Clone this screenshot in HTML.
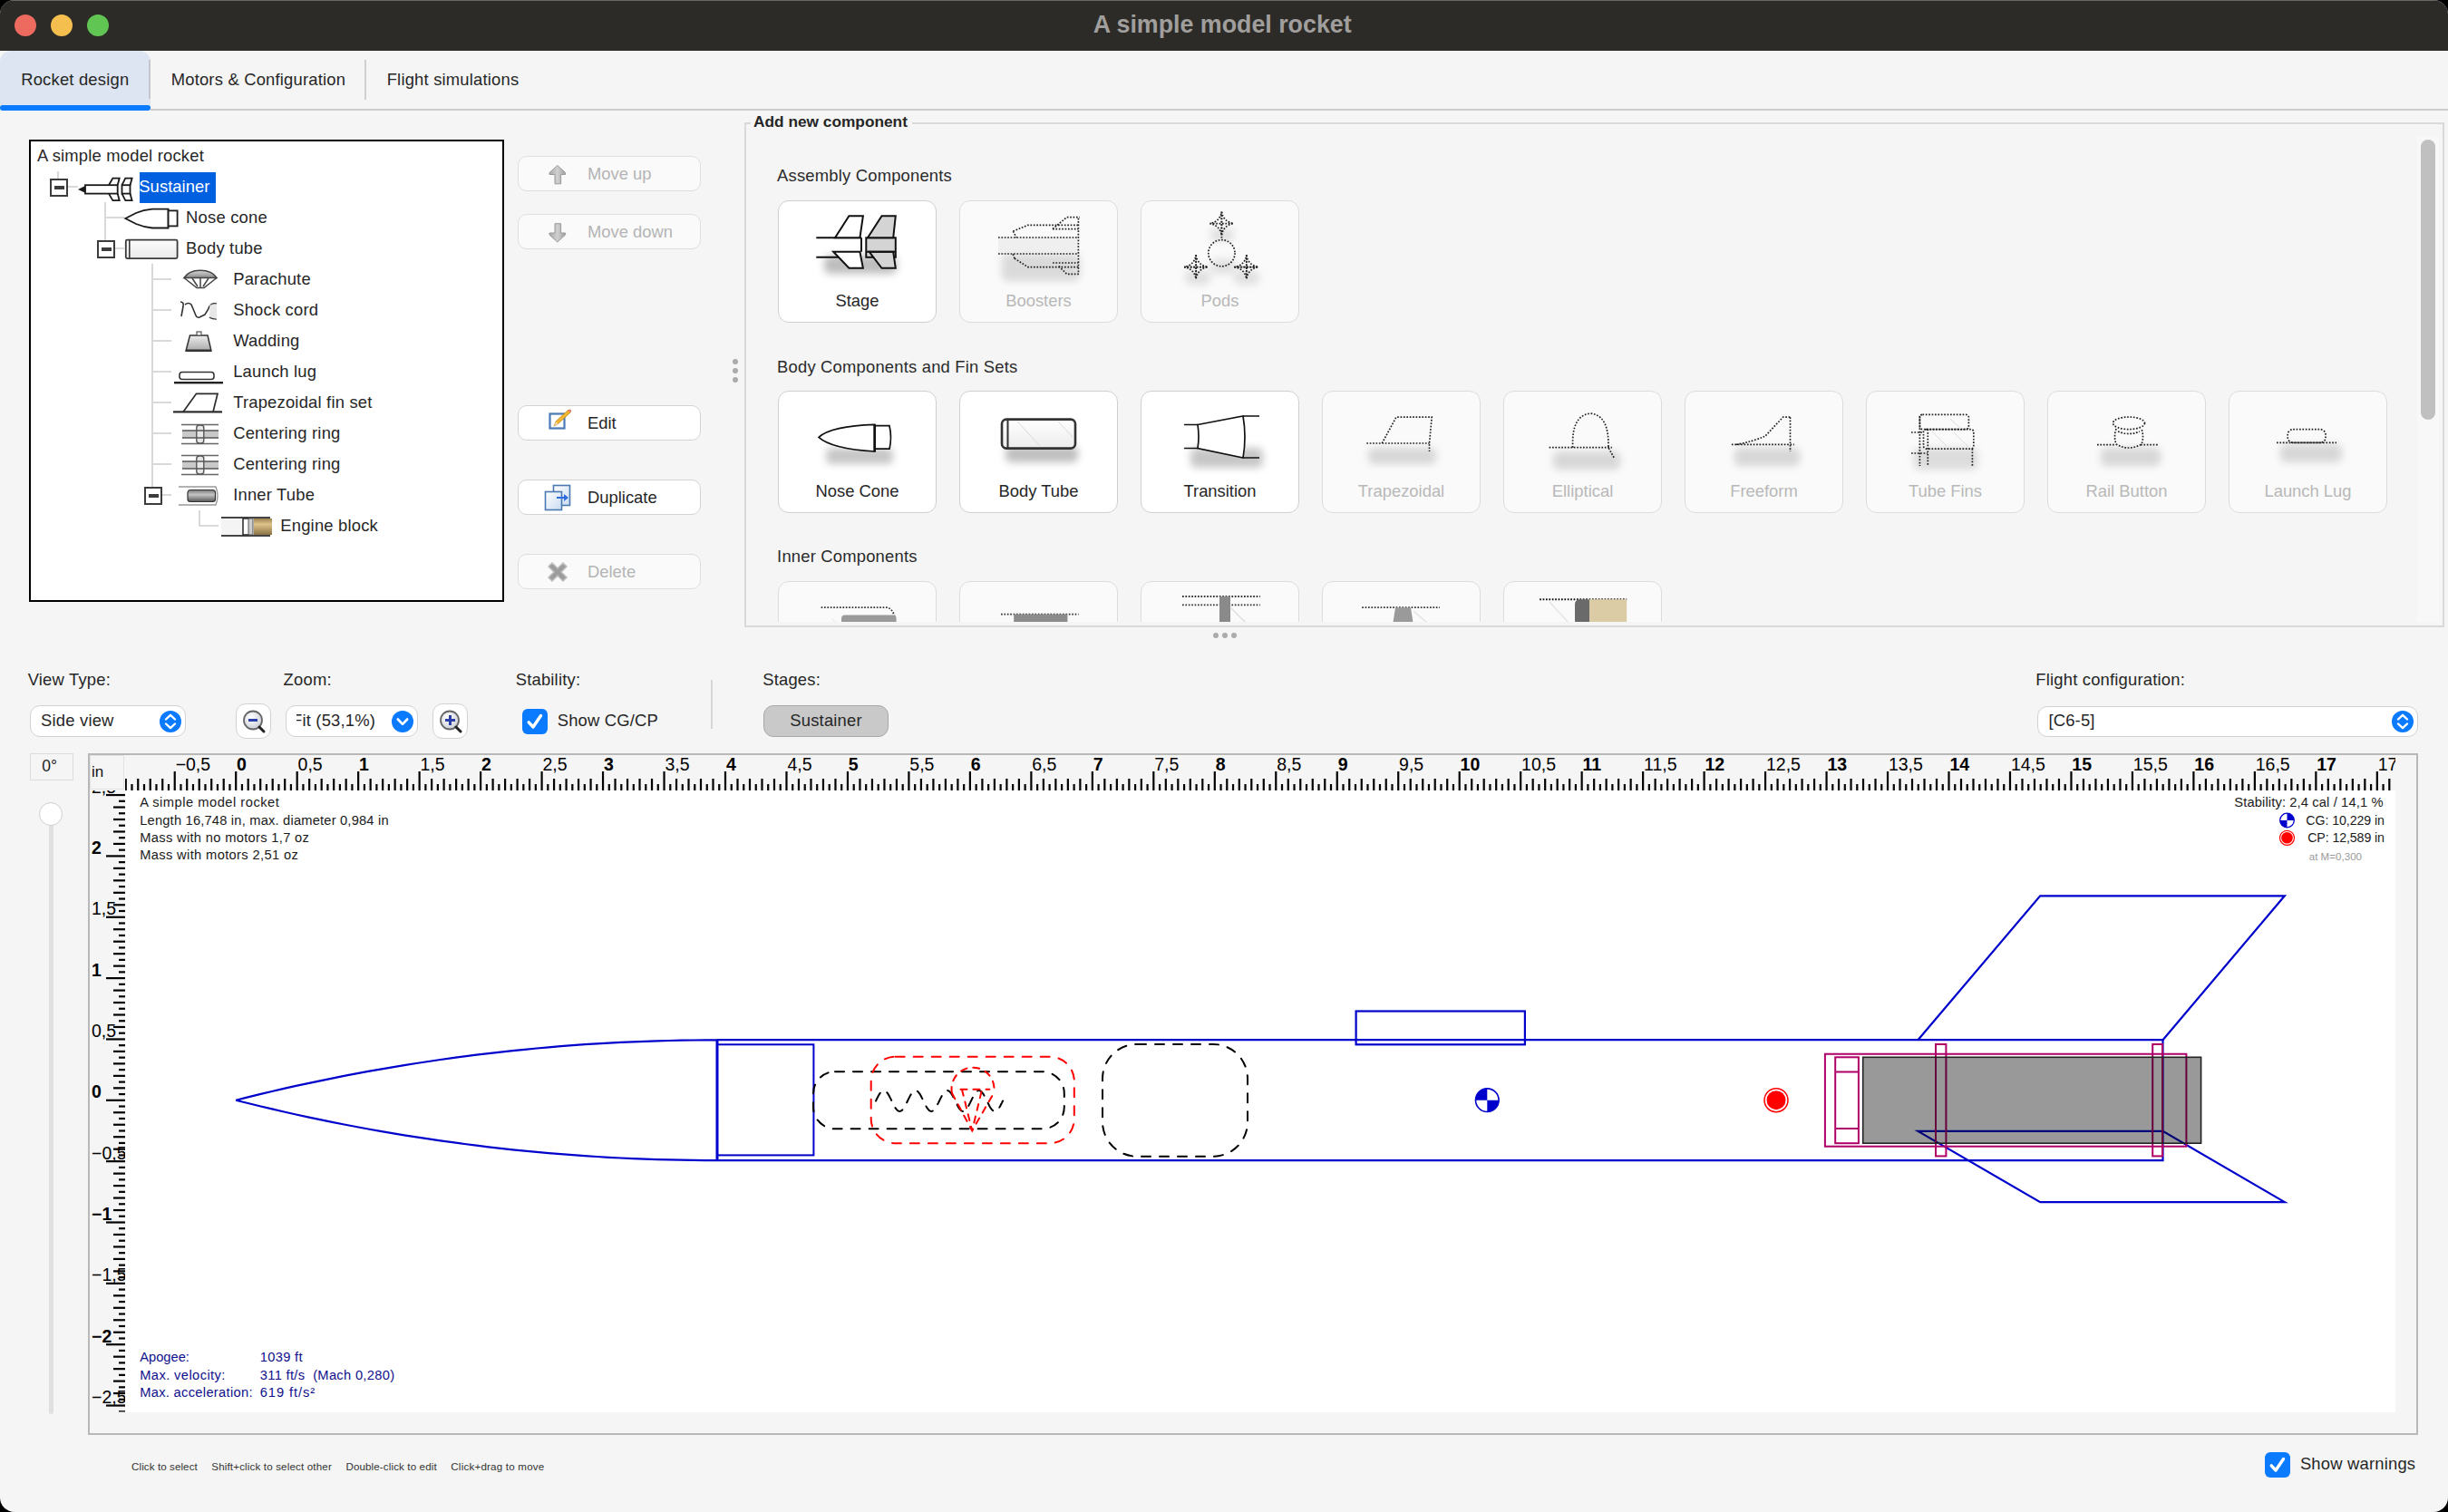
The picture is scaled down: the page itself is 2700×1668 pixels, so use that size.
<!DOCTYPE html><html><head><meta charset="utf-8"><style>

*{box-sizing:border-box;margin:0;padding:0}
html,body{width:2700px;height:1668px;overflow:hidden;background:#000}
body{font-family:"Liberation Sans",sans-serif;color:#262626;position:relative}
.win{position:absolute;left:0;top:0;width:2700px;height:1668px;background:#f5f5f5;border-radius:16px;overflow:hidden}
.a{position:absolute;white-space:pre}
.t{font-size:18.4px;line-height:22px}
.titlebar{position:absolute;left:0;top:0;width:2700px;height:56px;background:#2d2b27;border-top:1px solid #6a6865}
.light{position:absolute;width:24px;height:24px;border-radius:50%;top:16px}
.btn{position:absolute;left:571px;width:202px;height:39px;border:1.5px solid #d3d3d3;border-radius:10px;background:#fff}
.btn.dis{background:#fafafa;border-color:#dedede}
.btn .lbl{position:absolute;left:76px;top:8px;font-size:18.4px;line-height:22px;color:#262626;white-space:pre}
.btn.dis .lbl{color:#b4b4b4}
.btn svg{position:absolute;left:0;top:0}
.card{position:absolute;width:175px;height:135px;border:1.5px solid #cfcfcf;border-radius:12px;background:#fff;overflow:hidden}
.card.dis{background:#fafafa;border-color:#dcdcdc}
.card .lbl{position:absolute;left:0;width:100%;text-align:center;top:99px;font-size:18.4px;line-height:22px;color:#262626;white-space:pre}
.card.dis .lbl{color:#b8b8b8}
.card svg{position:absolute;left:0;top:0}
svg{overflow:visible}

</style></head><body><div class="win">
<svg width="0" height="0" style="position:absolute"><defs><filter id="blr" x="-50%" y="-50%" width="200%" height="200%"><feGaussianBlur stdDeviation="3.5"/></filter></defs></svg>
<div class="titlebar"></div>
<div class="light" style="left:16px;background:#ec6a5e"></div>
<div class="light" style="left:56px;background:#f4bf4f"></div>
<div class="light" style="left:96px;background:#61c554"></div>
<div class="a" style="left:1205.70px;top:11.03px;font-size:26.8px;line-height:32.16px;color:#a09f9d;font-weight:bold;">A simple model rocket</div>
<div class="a" style="left:0;top:56px;width:166px;height:64px;background:#dce5f1;border-radius:12px 12px 0 0"></div>
<div class="a" style="left:0;top:116px;width:166px;height:6px;background:#0a7aff;border-radius:3px"></div>
<div class="a" style="left:166px;top:120px;width:2534px;height:2px;background:#cbcbcb"></div>
<div class="a" style="left:164px;top:66px;width:2px;height:43px;background:#c4c8ce"></div>
<div class="a" style="left:402px;top:66px;width:2px;height:44px;background:#d0d0d0"></div>
<div class="a" style="left:23.20px;top:76.88px;font-size:18.4px;line-height:22.08px;color:#262626;font-weight:normal;letter-spacing:0.2px;">Rocket design</div>
<div class="a" style="left:188.70px;top:76.88px;font-size:18.4px;line-height:22.08px;color:#262626;font-weight:normal;letter-spacing:0.2px;">Motors &amp; Configuration</div>
<div class="a" style="left:426.70px;top:76.88px;font-size:18.4px;line-height:22.08px;color:#262626;font-weight:normal;letter-spacing:0.2px;">Flight simulations</div>
<div class="a" style="left:32px;top:154px;width:524px;height:510px;border:2px solid #000;background:#fff"></div>
<div class="a" style="left:40.90px;top:160.58px;font-size:18.4px;line-height:22.08px;color:#262626;font-weight:normal;letter-spacing:0.2px;">A simple model rocket</div>
<div class="a" style="left:63.0px;top:189px;width:2px;height:8px;background:#d9d9d9"></div>
<div class="a" style="left:75px;top:205.0px;width:11px;height:2px;background:#d9d9d9"></div>
<div class="a" style="left:115.0px;top:223px;width:2px;height:42px;background:#d9d9d9"></div>
<div class="a" style="left:116px;top:239.0px;width:21px;height:2px;background:#d9d9d9"></div>
<div class="a" style="left:127px;top:273.0px;width:10px;height:2px;background:#d9d9d9"></div>
<div class="a" style="left:167.0px;top:291px;width:2px;height:246px;background:#d9d9d9"></div>
<div class="a" style="left:168px;top:307.0px;width:21px;height:2px;background:#d9d9d9"></div>
<div class="a" style="left:168px;top:341.0px;width:21px;height:2px;background:#d9d9d9"></div>
<div class="a" style="left:168px;top:375.0px;width:21px;height:2px;background:#d9d9d9"></div>
<div class="a" style="left:168px;top:409.0px;width:21px;height:2px;background:#d9d9d9"></div>
<div class="a" style="left:168px;top:443.0px;width:21px;height:2px;background:#d9d9d9"></div>
<div class="a" style="left:168px;top:477.0px;width:21px;height:2px;background:#d9d9d9"></div>
<div class="a" style="left:168px;top:511.0px;width:21px;height:2px;background:#d9d9d9"></div>
<div class="a" style="left:179px;top:545.0px;width:10px;height:2px;background:#d9d9d9"></div>
<div class="a" style="left:219.0px;top:563px;width:2px;height:18px;background:#d9d9d9"></div>
<div class="a" style="left:220px;top:579.0px;width:21px;height:2px;background:#d9d9d9"></div>
<div class="a" style="left:55px;top:197px;width:20px;height:20px;border:2px solid #3c3c3c;background:#fff"></div><div class="a" style="left:59.5px;top:205px;width:11.5px;height:4px;background:#3c3c3c"></div>
<div class="a" style="left:107px;top:265px;width:20px;height:20px;border:2px solid #3c3c3c;background:#fff"></div><div class="a" style="left:111.5px;top:273px;width:11.5px;height:4px;background:#3c3c3c"></div>
<div class="a" style="left:159px;top:537px;width:20px;height:20px;border:2px solid #3c3c3c;background:#fff"></div><div class="a" style="left:163.5px;top:545px;width:11.5px;height:4px;background:#3c3c3c"></div>
<div class="a" style="left:154px;top:190px;width:84px;height:34px;background:#0060e0"></div>
<div class="a" style="left:153.30px;top:195.18px;font-size:18.4px;line-height:22.08px;color:#ffffff;font-weight:normal;letter-spacing:0.05px">Sustainer</div>
<div class="a" style="left:205.10px;top:229.18px;font-size:18.4px;line-height:22.08px;color:#262626;font-weight:normal;letter-spacing:0.2px;">Nose cone</div>
<div class="a" style="left:205.10px;top:263.18px;font-size:18.4px;line-height:22.08px;color:#262626;font-weight:normal;letter-spacing:0.2px;">Body tube</div>
<div class="a" style="left:257.20px;top:297.18px;font-size:18.4px;line-height:22.08px;color:#262626;font-weight:normal;letter-spacing:0.2px;">Parachute</div>
<div class="a" style="left:257.20px;top:331.18px;font-size:18.4px;line-height:22.08px;color:#262626;font-weight:normal;letter-spacing:0.2px;">Shock cord</div>
<div class="a" style="left:257.20px;top:365.18px;font-size:18.4px;line-height:22.08px;color:#262626;font-weight:normal;letter-spacing:0.2px;">Wadding</div>
<div class="a" style="left:257.20px;top:399.18px;font-size:18.4px;line-height:22.08px;color:#262626;font-weight:normal;letter-spacing:0.2px;">Launch lug</div>
<div class="a" style="left:257.20px;top:433.18px;font-size:18.4px;line-height:22.08px;color:#262626;font-weight:normal;letter-spacing:0.2px;">Trapezoidal fin set</div>
<div class="a" style="left:257.20px;top:467.18px;font-size:18.4px;line-height:22.08px;color:#262626;font-weight:normal;letter-spacing:0.2px;">Centering ring</div>
<div class="a" style="left:257.20px;top:501.18px;font-size:18.4px;line-height:22.08px;color:#262626;font-weight:normal;letter-spacing:0.2px;">Centering ring</div>
<div class="a" style="left:257.20px;top:535.18px;font-size:18.4px;line-height:22.08px;color:#262626;font-weight:normal;letter-spacing:0.2px;">Inner Tube</div>
<div class="a" style="left:309.30px;top:569.18px;font-size:18.4px;line-height:22.08px;color:#262626;font-weight:normal;letter-spacing:0.2px;">Engine block</div>
<svg class="a" style="left:84px;top:194px;" width="64" height="26" viewBox="0 0 64 26"><g fill="none" stroke="#1a1a1a" stroke-width="1.8"><rect x="10" y="10.2" width="35.7" height="9.4"/><path d="M36 10.2 L40.4 2.6 H47.7 L45.7 10.2 M36 19.6 L40.4 27.2 H47.7 L45.7 19.6"/><rect x="50.5" y="10.2" width="9" height="9.4"/><path d="M50.5 10.2 L54.3 2.6 H61.6 L59.5 10.2 M50.5 19.6 L54.3 27.2 H61.6 L59.5 19.6"/></g><path d="M2 14.9 L10 11 V18.8 Z" fill="#1a1a1a"/></svg>
<svg class="a" style="left:136px;top:228px;" width="64" height="26" viewBox="0 0 64 26"><g fill="#fff" stroke="#1a1a1a" stroke-width="1.8"><path d="M2.3 13 L14 7 Q22 3.6 32 2.6 H49.6 V23.5 H32 Q22 22.4 14 19 Z"/><rect x="49.6" y="4.4" width="10" height="17"/></g></svg>
<svg class="a" style="left:136px;top:262px;" width="64" height="26" viewBox="0 0 64 26"><defs><linearGradient id="bt" x1="0" y1="0" x2="0" y2="1"><stop offset="0" stop-color="#fdfdfd"/><stop offset="1" stop-color="#e9e9e9"/></linearGradient></defs><rect x="2.8" y="2.7" width="56.8" height="20.4" rx="1.5" fill="url(#bt)" stroke="#3a3a3a" stroke-width="1.8"/><line x1="6.8" y1="3" x2="6.8" y2="23" stroke="#3a3a3a" stroke-width="1.6"/></svg>
<svg class="a" style="left:200px;top:296px;" width="42" height="26" viewBox="0 0 42 26"><defs><linearGradient id="pc" x1="0" y1="0" x2="0" y2="1"><stop offset="0" stop-color="#d8d8d8"/><stop offset="1" stop-color="#888"/></linearGradient></defs><path d="M3 10.5 Q8 2.3 21 2.3 Q34 2.3 39 10.5 Z" fill="url(#pc)" stroke="#444" stroke-width="1.5"/><path d="M3 10.5 L17 21.5 H25 L39 10.5 M21 10.5 V21.5 M12 11 L18 20 M30 11 L24 20" fill="none" stroke="#444" stroke-width="1.5"/></svg>
<svg class="a" style="left:193px;top:330px;" width="52" height="26" viewBox="0 0 52 26"><path d="M6 3 Q10 3 9 8 L7 19 M11 6 Q15 3 18 6 L23 18 Q24 21 27 20 L33 17 Q36 13 38 8 M38 8 Q40 4 46 5 M38 20 Q41 22 46 22" fill="none" stroke="#333" stroke-width="1.6"/><path d="M38 6 L46 5 L46 22 L38 20 Z" fill="#ddd" opacity=".7"/></svg>
<svg class="a" style="left:202px;top:364px;" width="34" height="26" viewBox="0 0 34 26"><defs><linearGradient id="wd" x1="0" y1="0" x2="0" y2="1"><stop offset="0" stop-color="#eee"/><stop offset="1" stop-color="#a9a9a9"/></linearGradient></defs><path d="M7.5 6 H27 L31 23 H3 Z" fill="url(#wd)" stroke="#333" stroke-width="1.5"/><rect x="3" y="21.5" width="28" height="2.5" fill="#333"/><rect x="15" y="2" width="5" height="4" fill="#fff" stroke="#555" stroke-width="1.2"/></svg>
<svg class="a" style="left:188px;top:406px;" width="64" height="20" viewBox="0 0 64 20"><rect x="10" y="4.5" width="38" height="8" rx="3" fill="#fff" stroke="#333" stroke-width="1.6"/><rect x="4" y="15" width="54" height="2.4" fill="#222"/></svg>
<svg class="a" style="left:188px;top:432px;" width="64" height="26" viewBox="0 0 64 26"><path d="M14 22.4 L28.5 2.3 H52 L47 22.4" fill="none" stroke="#2b2b2b" stroke-width="1.7"/><rect x="3" y="21.3" width="54" height="2.2" fill="#2b2b2b"/></svg>
<svg class="a" style="left:198px;top:466px;" width="46" height="26" viewBox="0 0 46 26"><g stroke="#666" stroke-width="1.5"><line x1="2" y1="2.5" x2="43" y2="2.5"/><line x1="2" y1="23.5" x2="43" y2="23.5"/></g><rect x="3" y="9" width="40" height="8" fill="#c9c9c9"/><g stroke="#555" stroke-width="1.4" fill="#e6e6e6"><rect x="18.8" y="3" width="8" height="20" rx="3"/></g><line x1="3" y1="9" x2="43" y2="9" stroke="#555" stroke-width="1.3"/><line x1="3" y1="17" x2="43" y2="17" stroke="#555" stroke-width="1.3"/></svg>
<svg class="a" style="left:198px;top:500px;" width="46" height="26" viewBox="0 0 46 26"><g stroke="#666" stroke-width="1.5"><line x1="2" y1="2.5" x2="43" y2="2.5"/><line x1="2" y1="23.5" x2="43" y2="23.5"/></g><rect x="3" y="9" width="40" height="8" fill="#c9c9c9"/><g stroke="#555" stroke-width="1.4" fill="#e6e6e6"><rect x="18.8" y="3" width="8" height="20" rx="3"/></g><line x1="3" y1="9" x2="43" y2="9" stroke="#555" stroke-width="1.3"/><line x1="3" y1="17" x2="43" y2="17" stroke="#555" stroke-width="1.3"/></svg>
<svg class="a" style="left:194px;top:534px;" width="50" height="26" viewBox="0 0 50 26"><defs><linearGradient id="it" x1="0" y1="0" x2="0" y2="1"><stop offset="0" stop-color="#777"/><stop offset=".4" stop-color="#c5c5c5"/><stop offset="1" stop-color="#555"/></linearGradient></defs><path d="M3 3 H44 Q48 13 44 23 H3" fill="none" stroke="#999" stroke-width="1.4"/><rect x="13" y="6.5" width="30.5" height="13" rx="3" fill="url(#it)" stroke="#333" stroke-width="1.2"/></svg>
<svg class="a" style="left:242px;top:568px;" width="62" height="26" viewBox="0 0 62 26"><defs><linearGradient id="eb" x1="0" y1="0" x2="0" y2="1"><stop offset="0" stop-color="#9a8150"/><stop offset=".35" stop-color="#e0c38a"/><stop offset="1" stop-color="#8b7345"/></linearGradient></defs><rect x="2" y="4" width="26" height="18" fill="#f4f4f4"/><line x1="2" y1="3" x2="56" y2="3" stroke="#444" stroke-width="1.8"/><line x1="2" y1="23" x2="56" y2="23" stroke="#444" stroke-width="1.8"/><rect x="38" y="4" width="20" height="18" fill="url(#eb)"/><rect x="26" y="4" width="8" height="18" fill="#fff" stroke="#333" stroke-width="1.6"/><rect x="32" y="4" width="5" height="18" fill="#ccc" stroke="#555" stroke-width="1"/></svg>
<div class="btn dis" style="top:172px"><svg width="202" height="39" viewBox="0 0 202 39"><defs><linearGradient id="ag" x1="0" y1="0" x2="1" y2="0"><stop offset="0" stop-color="#a8a8a8"/><stop offset=".5" stop-color="#d0d0d0"/><stop offset="1" stop-color="#a0a0a0"/></linearGradient></defs><path d="M42.8 9.5 L51.6 17.5 V19.5 H46.6 V29.8 H40 V19.5 H34 V17.5 Z" fill="url(#ag)" stroke="#9a9a9a" stroke-width="1"/></svg><div class="lbl" style="top:8.1px">Move up</div></div>
<div class="btn dis" style="top:236px"><svg width="202" height="39" viewBox="0 0 202 39"><path d="M42.8 30 L51.6 22 V20 H46.6 V9.7 H40 V20 H34 V22 Z" fill="url(#ag)" stroke="#9a9a9a" stroke-width="1"/></svg><div class="lbl" style="top:8.1px">Move down</div></div>
<div class="btn" style="top:446.5px"><svg width="202" height="39" viewBox="0 0 202 39"><rect x="34.5" y="8.5" width="16" height="16" fill="#fff" stroke="#4a7ab5" stroke-width="2.2"/><path d="M39 22 L41 17 L55 4 L57.5 6.5 L43.5 19.5 Z" fill="#f5b82e" stroke="#b57f10" stroke-width=".8"/><path d="M39 22 L41 17 L43.5 19.5 Z" fill="#f3d9a0"/><circle cx="56.5" cy="5" r="1.6" fill="#e87a6a"/></svg><div class="lbl" style="top:8.1px">Edit</div></div>
<div class="btn" style="top:528.5px"><svg width="202" height="39" viewBox="0 0 202 39"><defs><linearGradient id="dg" x1="0" y1="0" x2="1" y2="1"><stop offset="0" stop-color="#fff"/><stop offset="1" stop-color="#c9dcf2"/></linearGradient></defs><rect x="38.5" y="5.5" width="18" height="22" fill="url(#dg)" stroke="#4a78b0" stroke-width="1.6"/><rect x="29.5" y="12.5" width="18" height="20" fill="url(#dg)" stroke="#4a78b0" stroke-width="1.6"/><path d="M42 18 H50 V15 L55 19 L50 23 V20 H42 Z" fill="#2f6be0"/></svg><div class="lbl" style="top:8.1px">Duplicate</div></div>
<div class="btn dis" style="top:610.5px"><svg width="202" height="39" viewBox="0 0 202 39"><path d="M33 13 L37 9 L43 15 L49 9 L53 13 L47 19 L53 25 L49 29 L43 23 L37 29 L33 25 L39 19 Z" fill="#9c9c9c" stroke="#bdbdbd" stroke-width="1.5"/></svg><div class="lbl" style="top:8.1px">Delete</div></div>
<div class="a" style="left:808px;top:396px;width:6px;height:6px;border-radius:50%;background:#ababab"></div>
<div class="a" style="left:808px;top:406px;width:6px;height:6px;border-radius:50%;background:#ababab"></div>
<div class="a" style="left:808px;top:416px;width:6px;height:6px;border-radius:50%;background:#ababab"></div>
<div class="a" style="left:1338px;top:698px;width:6px;height:6px;border-radius:50%;background:#ababab"></div>
<div class="a" style="left:1348px;top:698px;width:6px;height:6px;border-radius:50%;background:#ababab"></div>
<div class="a" style="left:1358px;top:698px;width:6px;height:6px;border-radius:50%;background:#ababab"></div>
<div class="a" style="left:821px;top:134.5px;width:1875px;height:557px;border:2px solid #d9d9d9;border-top-width:2px"></div>
<div class="a" style="left:828px;top:126px;width:178px;height:18px;background:#f5f5f5"></div>
<div class="a" style="left:831.00px;top:123.63px;font-size:17.3px;line-height:20.76px;color:#262626;font-weight:bold;">Add new component</div>
<div class="a" style="left:2666px;top:150px;width:24px;height:536px;background:#f8f8f8"></div>
<div class="a" style="left:2670px;top:154px;width:16px;height:309px;border-radius:8px;background:#c0c0c0"></div>
<div class="a" style="left:857.10px;top:183.18px;font-size:18.4px;line-height:22.08px;color:#2a2a2a;font-weight:normal;letter-spacing:0.2px;">Assembly Components</div>
<div class="a" style="left:857.10px;top:393.68px;font-size:18.4px;line-height:22.08px;color:#2a2a2a;font-weight:normal;letter-spacing:0.2px;">Body Components and Fin Sets</div>
<div class="a" style="left:857.10px;top:603.18px;font-size:18.4px;line-height:22.08px;color:#2a2a2a;font-weight:normal;letter-spacing:0.2px;">Inner Components</div>
<div class="card" style="left:858px;top:221px"><svg width="175" height="135" viewBox="0 0 175 135"><defs><filter id="blr858_221" x="-50%" y="-50%" width="200%" height="200%"><feGaussianBlur stdDeviation="4.5"/></filter></defs><rect x="50" y="60" width="80" height="20" rx="6" fill="rgba(0,0,0,0.26)" filter="url(#blr858_221)"/><g fill="#fff" stroke="#111" stroke-width="2"><path d="M41.3 40.3 H91 M41.3 61.8 H66" fill="none"/><path d="M62 40.3 L77.4 16.2 H92.9 L89.4 40.3 Z"/><path d="M60.2 55.8 L77.4 73.8 H92.9 L89.4 55.8 Z"/><path d="M91 40.3 V55.8" fill="none"/></g><g fill="#d4d4d4" stroke="#111" stroke-width="2"><rect x="96.3" y="40.3" width="32.5" height="21.5"/><path d="M98 40.3 L113.5 16.2 H128.8 L126.2 40.3 Z"/><path d="M99.8 55.8 L113.5 73.8 H128.8 L126.2 55.8 Z"/><path d="M96.3 55.8 H128.8" fill="none"/></g></svg><div class="lbl">Stage</div></div>
<div class="card dis" style="left:1058px;top:221px"><svg width="175" height="135" viewBox="0 0 175 135"><defs><filter id="blr1058_221" x="-50%" y="-50%" width="200%" height="200%"><feGaussianBlur stdDeviation="4.5"/></filter></defs><rect x="46" y="58" width="86" height="30" rx="6" fill="rgba(0,0,0,0.13)" filter="url(#blr1058_221)"/><rect x="42" y="40" width="88" height="18" fill="#ececec" opacity=".8"/><g fill="none" stroke="#222" stroke-width="1.7" stroke-dasharray="1.7 1.7"><path d="M42 40 H130.4 M42 58 H130.4 M130.4 18.7 V80.3"/><path d="M58.4 33.1 L74.7 26.3 H130.4 M58.4 33.1 L62 40 M102 30.6 H130.4"/><path d="M102 30.6 L117.6 17.7 H132"/><path d="M60 63.1 L74.7 72.6 H130.4 M60 63.1 L58 58 M102 68 H130.4"/><path d="M108.9 71.7 L117.6 80.3 H132"/></g></svg><div class="lbl">Boosters</div></div>
<div class="card dis" style="left:1258px;top:221px"><svg width="175" height="135" viewBox="0 0 175 135"><defs><filter id="blr1258_221" x="-50%" y="-50%" width="200%" height="200%"><feGaussianBlur stdDeviation="4.5"/></filter></defs><rect x="76" y="64" width="28" height="16" rx="6" fill="rgba(0,0,0,0.1)" filter="url(#blr1258_221)"/><rect x="48" y="76" width="28" height="16" rx="6" fill="rgba(0,0,0,0.1)" filter="url(#blr1258_221)"/><rect x="102" y="76" width="28" height="16" rx="6" fill="rgba(0,0,0,0.1)" filter="url(#blr1258_221)"/><rect x="76" y="30" width="26" height="14" rx="6" fill="rgba(0,0,0,0.1)" filter="url(#blr1258_221)"/><g fill="none" stroke="#222" stroke-width="1.7" stroke-dasharray="1.7 1.7"><circle cx="88.4" cy="57.2" r="14.6"/><path d="M88.4 11.600000000000001 Q90.4 22.6 101.4 24.6 Q90.4 26.6 88.4 37.6 Q86.4 26.6 75.4 24.6 Q86.4 22.6 88.4 11.600000000000001 Z M75.4 24.6 H101.4 M88.4 11.600000000000001 V37.6"/><path d="M60.1 59.599999999999994 Q62.1 70.6 73.1 72.6 Q62.1 74.6 60.1 85.6 Q58.1 74.6 47.1 72.6 Q58.1 70.6 60.1 59.599999999999994 Z M47.1 72.6 H73.1 M60.1 59.599999999999994 V85.6"/><path d="M115.8 59.599999999999994 Q117.8 70.6 128.8 72.6 Q117.8 74.6 115.8 85.6 Q113.8 74.6 102.8 72.6 Q113.8 70.6 115.8 59.599999999999994 Z M102.8 72.6 H128.8 M115.8 59.599999999999994 V85.6"/><path d="M88.4 11.7 V42 M47 72.6 H74 M102 72.6 H129 M60.1 59 V86 M115.8 59 V86"/></g></svg><div class="lbl">Pods</div></div>
<div class="card" style="left:858px;top:431px"><svg width="175" height="135" viewBox="0 0 175 135"><defs><filter id="blr858_431" x="-50%" y="-50%" width="200%" height="200%"><feGaussianBlur stdDeviation="4.5"/></filter></defs><rect x="52" y="62" width="74" height="18" rx="6" fill="rgba(0,0,0,0.22)" filter="url(#blr858_431)"/><g fill="#fff" stroke="#111" stroke-width="1.7"><path d="M44 50.3 Q58 38 105.7 36.4 V66 Q58 63 44 50.3 Z"/><path d="M105.7 37.7 H122 Q125 50.5 122 63.2 H105.7 Z"/></g><line x1="105.7" y1="36" x2="105.7" y2="66.4" stroke="#111" stroke-width="2.6"/></svg><div class="lbl">Nose Cone</div></div>
<div class="card" style="left:1058px;top:431px"><svg width="175" height="135" viewBox="0 0 175 135"><defs><filter id="blr1058_431" x="-50%" y="-50%" width="200%" height="200%"><feGaussianBlur stdDeviation="4.5"/></filter></defs><rect x="50" y="60" width="80" height="18" rx="6" fill="rgba(0,0,0,0.25)" filter="url(#blr1058_431)"/><defs><linearGradient id="cbt" x1="0" y1="0" x2="0" y2="1"><stop offset="0" stop-color="#fff"/><stop offset="1" stop-color="#ececec"/></linearGradient></defs><rect x="46" y="30.6" width="81" height="32" rx="5" fill="url(#cbt)" stroke="#333" stroke-width="2.6"/><line x1="52.5" y1="31" x2="52.5" y2="62" stroke="#333" stroke-width="2"/><line x1="63" y1="33" x2="88" y2="60" stroke="#d8d8d8" stroke-width="1"/><line x1="108" y1="33" x2="124" y2="50" stroke="#d8d8d8" stroke-width="1"/></svg><div class="lbl">Body Tube</div></div>
<div class="card" style="left:1258px;top:431px"><svg width="175" height="135" viewBox="0 0 175 135"><defs><filter id="blr1258_431" x="-50%" y="-50%" width="200%" height="200%"><feGaussianBlur stdDeviation="4.5"/></filter></defs><rect x="54" y="62" width="80" height="22" rx="6" fill="rgba(0,0,0,0.22)" filter="url(#blr1258_431)"/><g fill="#fff" stroke="#111" stroke-width="1.7"><path d="M62 36.5 L112 27 Q116 50 112 73 L62 62.5 Q64 50 62 36.5 Z"/><path d="M47 36.5 H62 M47 62.5 H62 M112 27 H130 M112 73 H130" fill="none"/></g></svg><div class="lbl">Transition</div></div>
<div class="card dis" style="left:1458px;top:431px"><svg width="175" height="135" viewBox="0 0 175 135"><defs><filter id="blr1458_431" x="-50%" y="-50%" width="200%" height="200%"><feGaussianBlur stdDeviation="4.5"/></filter></defs><rect x="50" y="62" width="75" height="18" rx="6" fill="rgba(0,0,0,0.14)" filter="url(#blr1458_431)"/><path d="M48.3 57 H117.5 M65.3 57 L80.9 28.2 H120.2 L117.5 57 V66" fill="none" stroke="#222" stroke-width="1.7" stroke-dasharray="1.7 1.7"/></svg><div class="lbl">Trapezoidal</div></div>
<div class="card dis" style="left:1658px;top:431px"><svg width="175" height="135" viewBox="0 0 175 135"><defs><filter id="blr1658_431" x="-50%" y="-50%" width="200%" height="200%"><feGaussianBlur stdDeviation="4.5"/></filter></defs><rect x="54" y="66" width="74" height="20" rx="6" fill="rgba(0,0,0,0.14)" filter="url(#blr1658_431)"/><path d="M49.6 61.7 H118.9 M75.7 61.7 Q74 26 95.3 24.1 Q116 26 114.9 61.7 L121.5 73.5" fill="none" stroke="#222" stroke-width="1.7" stroke-dasharray="1.7 1.7"/></svg><div class="lbl">Elliptical</div></div>
<div class="card dis" style="left:1858px;top:431px"><svg width="175" height="135" viewBox="0 0 175 135"><defs><filter id="blr1858_431" x="-50%" y="-50%" width="200%" height="200%"><feGaussianBlur stdDeviation="4.5"/></filter></defs><rect x="54" y="62" width="72" height="20" rx="6" fill="rgba(0,0,0,0.14)" filter="url(#blr1858_431)"/><path d="M50.9 58.3 H119.9 M56 58.3 Q75 55 88 49 L107.6 28.2 H116.8 M115.5 28.2 V66" fill="none" stroke="#222" stroke-width="1.7" stroke-dasharray="1.7 1.7"/></svg><div class="lbl">Freeform</div></div>
<div class="card dis" style="left:2058px;top:431px"><svg width="175" height="135" viewBox="0 0 175 135"><defs><filter id="blr2058_431" x="-50%" y="-50%" width="200%" height="200%"><feGaussianBlur stdDeviation="4.5"/></filter></defs><rect x="52" y="62" width="70" height="24" rx="6" fill="rgba(0,0,0,0.12)" filter="url(#blr2058_431)"/><g fill="none" stroke="#222" stroke-width="1.7" stroke-dasharray="1.7 1.7"><rect x="58.4" y="25.4" width="54" height="16.2" rx="3"/><rect x="62.5" y="41.6" width="55.3" height="21.5" rx="3"/><path d="M58.4 26.7 V81.9 M67.3 41.6 V81.9 M116.4 63 V82 M49 45 H62 M49 68 H67"/></g><path d="M72 44 L88 60 M92 30 L104 41 M96 45 L112 61" stroke="#ddd" stroke-width="1"/></svg><div class="lbl">Tube Fins</div></div>
<div class="card dis" style="left:2258px;top:431px"><svg width="175" height="135" viewBox="0 0 175 135"><defs><filter id="blr2258_431" x="-50%" y="-50%" width="200%" height="200%"><feGaussianBlur stdDeviation="4.5"/></filter></defs><rect x="58" y="62" width="66" height="20" rx="6" fill="rgba(0,0,0,0.14)" filter="url(#blr2258_431)"/><g fill="none" stroke="#222" stroke-width="1.7" stroke-dasharray="1.7 1.7"><path d="M54 58.6 H73 M102 58.6 H121.3"/><ellipse cx="89" cy="34.8" rx="17.5" ry="6.8"/><path d="M75 41 Q72 50 75 58 Q89 66 103 58 Q106 50 103 41"/><path d="M77 44 Q89 49 101 44"/></g></svg><div class="lbl">Rail Button</div></div>
<div class="card dis" style="left:2458px;top:431px"><svg width="175" height="135" viewBox="0 0 175 135"><defs><filter id="blr2458_431" x="-50%" y="-50%" width="200%" height="200%"><feGaussianBlur stdDeviation="4.5"/></filter></defs><rect x="56" y="58" width="68" height="20" rx="6" fill="rgba(0,0,0,0.14)" filter="url(#blr2458_431)"/><g fill="none" stroke="#222" stroke-width="1.7" stroke-dasharray="1.7 1.7"><path d="M52 56.4 H118"/><rect x="64.2" y="41.6" width="41.8" height="14.8" rx="6"/></g></svg><div class="lbl">Launch Lug</div></div>
<div class="a" style="left:822px;top:636px;width:1844px;height:50px;overflow:hidden"><div class="card dis" style="left:36px;top:5px"><svg width="175" height="135" viewBox="0 0 175 135"><defs><filter id="blr36_5" x="-50%" y="-50%" width="200%" height="200%"><feGaussianBlur stdDeviation="4.5"/></filter></defs><path d="M46.6 28.2 H120 Q126 30 128 40" stroke="#333" stroke-width="1.8" stroke-dasharray="1.7 1.7" fill="none"/><rect x="69" y="36.4" width="60.6" height="12" rx="4" fill="#9a9a9a"/><path d="M58 40 L66 48" stroke="#e4e4e4" stroke-width="1"/></svg><div class="lbl"></div></div><div class="card dis" style="left:236px;top:5px"><svg width="175" height="135" viewBox="0 0 175 135"><defs><filter id="blr236_5" x="-50%" y="-50%" width="200%" height="200%"><feGaussianBlur stdDeviation="4.5"/></filter></defs><path d="M45 35.6 H130.6" stroke="#333" stroke-width="1.8" stroke-dasharray="1.7 1.7" fill="none"/><rect x="59.2" y="35.6" width="59.2" height="12" fill="#8c8c8c"/></svg><div class="lbl"></div></div><div class="card dis" style="left:436px;top:5px"><svg width="175" height="135" viewBox="0 0 175 135"><defs><filter id="blr436_5" x="-50%" y="-50%" width="200%" height="200%"><feGaussianBlur stdDeviation="4.5"/></filter></defs><path d="M45 16 H130.8 M45 25.4 H130.8" stroke="#333" stroke-width="1.8" stroke-dasharray="1.7 1.7" fill="none"/><rect x="86" y="16" width="12" height="32" fill="#8a8a8a"/><path d="M98 28 L116 46" stroke="#e0e0e0" stroke-width="1.5"/></svg><div class="lbl"></div></div><div class="card dis" style="left:636px;top:5px"><svg width="175" height="135" viewBox="0 0 175 135"><defs><filter id="blr636_5" x="-50%" y="-50%" width="200%" height="200%"><feGaussianBlur stdDeviation="4.5"/></filter></defs><path d="M43.2 28.2 H129" stroke="#333" stroke-width="1.8" stroke-dasharray="1.7 1.7" fill="none"/><path d="M80 28.2 H97 L100 48 H77 Z" fill="#9a9a9a"/><path d="M100 32 L116 46" stroke="#e4e4e4" stroke-width="1.5"/></svg><div class="lbl"></div></div><div class="card dis" style="left:836px;top:5px"><svg width="175" height="135" viewBox="0 0 175 135"><defs><filter id="blr836_5" x="-50%" y="-50%" width="200%" height="200%"><feGaussianBlur stdDeviation="4.5"/></filter></defs><path d="M39.2 19.2 H135.2" stroke="#111" stroke-width="2" stroke-dasharray="1.7 1.7"/><path d="M50 22 L72 46" stroke="#e4e4e4" stroke-width="1.5"/><rect x="78" y="19.2" width="18.4" height="28" rx="5" fill="#6a6a6a"/><rect x="94" y="19.2" width="41.2" height="28" fill="#dccca6"/></svg><div class="lbl"></div></div></div>
<div class="a" style="left:30.70px;top:739.28px;font-size:18.4px;line-height:22.08px;color:#262626;font-weight:normal;letter-spacing:0.2px;">View Type:</div>
<div class="a" style="left:312.60px;top:739.28px;font-size:18.4px;line-height:22.08px;color:#262626;font-weight:normal;letter-spacing:0.2px;">Zoom:</div>
<div class="a" style="left:568.70px;top:739.28px;font-size:18.4px;line-height:22.08px;color:#262626;font-weight:normal;letter-spacing:0.2px;">Stability:</div>
<div class="a" style="left:841.20px;top:739.28px;font-size:18.4px;line-height:22.08px;color:#262626;font-weight:normal;letter-spacing:0.2px;">Stages:</div>
<div class="a" style="left:2245.30px;top:739.28px;font-size:18.4px;line-height:22.08px;color:#262626;font-weight:normal;letter-spacing:0.2px;">Flight configuration:</div>
<div class="a" style="left:32.7px;top:778.3px;width:172.5px;height:35.0px;background:#fff;border:1.5px solid #d2d2d2;border-radius:11px"></div><svg class="a" style="left:176.2px;top:783.8px;" width="24" height="24" viewBox="0 0 24 24"><circle cx="12" cy="12" r="12" fill="#0a7aff"/><path d="M7 9.5 L12 4.8 L17 9.5 M7 14.5 L12 19.2 L17 14.5" fill="none" stroke="#fff" stroke-width="2.4" stroke-linecap="round" stroke-linejoin="round"/></svg>
<div class="a" style="left:45.10px;top:784.28px;font-size:18.4px;line-height:22.08px;color:#262626;font-weight:normal;letter-spacing:0.2px;">Side view</div>
<div class="a" style="left:260.4px;top:776px;width:39px;height:39px;background:#fff;border:1.5px solid #d2d2d2;border-radius:11px"></div><svg class="a" style="left:262.4px;top:781px;" width="34" height="32" viewBox="0 0 34 32"><defs><radialGradient id="zgTrue" cx=".4" cy=".35" r=".7"><stop offset="0" stop-color="#fff"/><stop offset="1" stop-color="#c9cdd6"/></radialGradient></defs><circle cx="17" cy="13.5" r="10" fill="url(#zgTrue)" stroke="#666" stroke-width="1.8"/><path d="M12 13.5 H22" stroke="#2a3fa8" stroke-width="3"/><path d="M24 21 L29 26" stroke="#222" stroke-width="3" stroke-linecap="round"/></svg>
<div class="a" style="left:314.6px;top:778.3px;width:146.39999999999998px;height:35.0px;background:#fff;border:1.5px solid #d2d2d2;border-radius:11px"></div><svg class="a" style="left:432px;top:783.8px;" width="24" height="24" viewBox="0 0 24 24"><circle cx="12" cy="12" r="12" fill="#0a7aff"/><path d="M6.8 9.5 L12 14.8 L17.2 9.5" fill="none" stroke="#fff" stroke-width="2.6" stroke-linecap="round" stroke-linejoin="round"/></svg>
<div class="a" style="left:327px;top:780px;width:90px;height:30px;overflow:hidden"><div class="a" style="left:-5.00px;top:4.28px;font-size:18.4px;line-height:22.08px;color:#262626;font-weight:normal;letter-spacing:0.2px;">Fit (53,1%)</div></div>
<div class="a" style="left:476.5px;top:776px;width:39px;height:39px;background:#fff;border:1.5px solid #d2d2d2;border-radius:11px"></div><svg class="a" style="left:478.5px;top:781px;" width="34" height="32" viewBox="0 0 34 32"><defs><radialGradient id="zgFalse" cx=".4" cy=".35" r=".7"><stop offset="0" stop-color="#fff"/><stop offset="1" stop-color="#c9cdd6"/></radialGradient></defs><circle cx="17" cy="13.5" r="10" fill="url(#zgFalse)" stroke="#666" stroke-width="1.8"/><path d="M12 13.5 H23 M17.5 8 V19" stroke="#2a3fa8" stroke-width="3"/><path d="M24 21 L29 26" stroke="#222" stroke-width="3" stroke-linecap="round"/></svg>
<div class="a" style="left:576px;top:782px;width:28px;height:28px;background:#0a7aff;border-radius:6px"></div><svg class="a" style="left:576px;top:782px;" width="28" height="28" viewBox="0 0 28 28"><path d="M7.2 14.8 L12 20 L20.5 7.5" fill="none" stroke="#fff" stroke-width="3.4" stroke-linecap="round" stroke-linejoin="round"/></svg>
<div class="a" style="left:614.70px;top:784.28px;font-size:18.4px;line-height:22.08px;color:#262626;font-weight:normal;letter-spacing:0.2px;">Show CG/CP</div>
<div class="a" style="left:784px;top:750px;width:2px;height:54px;background:#d6d6d6"></div>
<div class="a" style="left:842px;top:778.2px;width:138px;height:35.2px;background:#c9c9c9;border:1.5px solid #a8a8a8;border-radius:11px"></div>
<div class="a" style="left:871.30px;top:784.28px;font-size:18.4px;line-height:22.08px;color:#262626;font-weight:normal;letter-spacing:0.2px;">Sustainer</div>
<div class="a" style="left:2247px;top:779.2px;width:419.6999999999998px;height:33.799999999999955px;background:#fff;border:1.5px solid #d2d2d2;border-radius:11px"></div><svg class="a" style="left:2637.7px;top:784.1px;" width="24" height="24" viewBox="0 0 24 24"><circle cx="12" cy="12" r="12" fill="#0a7aff"/><path d="M7 9.5 L12 4.8 L17 9.5 M7 14.5 L12 19.2 L17 14.5" fill="none" stroke="#fff" stroke-width="2.4" stroke-linecap="round" stroke-linejoin="round"/></svg>
<div class="a" style="left:2259.40px;top:784.28px;font-size:18.4px;line-height:22.08px;color:#262626;font-weight:normal;letter-spacing:0.2px;">[C6-5]</div>
<div class="a" style="left:32.7px;top:831px;width:48.6px;height:30px;border:1.5px solid #dcdcdc;background:#f5f5f5"></div>
<div class="a" style="left:46.20px;top:834.84px;font-size:17.5px;line-height:21.0px;color:#222;font-weight:normal;">0°</div>
<div class="a" style="left:53.5px;top:898px;width:5.4px;height:662px;background:#e0e0e0;border-radius:3px"></div>
<div class="a" style="left:43px;top:885px;width:26px;height:26px;border-radius:50%;background:#fff;border:1.5px solid #cfcfcf"></div>
<div class="a" style="left:96.5px;top:830.5px;width:2570.5px;height:752.5px;border:2px solid #b8b8b8;background:#f5f5f5"></div>
<div class="a" style="left:138px;top:872px;width:2504px;height:685.5px;background:#fff"></div>
<svg class="a" style="left:0;top:0" width="2700" height="1668" viewBox="0 0 2700 1668"><defs><clipPath id="rt"><rect x="138" y="832" width="2500" height="40"/></clipPath><clipPath id="rl"><rect x="98" y="872" width="40" height="685.5"/></clipPath><clipPath id="rtl"><rect x="138" y="832" width="2504" height="40"/></clipPath></defs><g fill="#000" clip-path="url(#rt)"><rect x="137.65" y="859" width="2.2" height="13"/><rect x="144.39" y="865" width="2.2" height="7"/><rect x="151.14" y="859" width="2.2" height="13"/><rect x="157.89" y="865" width="2.2" height="7"/><rect x="164.64" y="859" width="2.2" height="13"/><rect x="171.38" y="865" width="2.2" height="7"/><rect x="178.13" y="859" width="2.2" height="13"/><rect x="184.88" y="865" width="2.2" height="7"/><rect x="191.63" y="851" width="2.2" height="21"/><rect x="198.37" y="865" width="2.2" height="7"/><rect x="205.12" y="859" width="2.2" height="13"/><rect x="211.87" y="865" width="2.2" height="7"/><rect x="218.62" y="859" width="2.2" height="13"/><rect x="225.36" y="865" width="2.2" height="7"/><rect x="232.11" y="859" width="2.2" height="13"/><rect x="238.86" y="865" width="2.2" height="7"/><rect x="245.61" y="859" width="2.2" height="13"/><rect x="252.35" y="865" width="2.2" height="7"/><rect x="259.10" y="851" width="2.2" height="21"/><rect x="265.85" y="865" width="2.2" height="7"/><rect x="272.60" y="859" width="2.2" height="13"/><rect x="279.34" y="865" width="2.2" height="7"/><rect x="286.09" y="859" width="2.2" height="13"/><rect x="292.84" y="865" width="2.2" height="7"/><rect x="299.59" y="859" width="2.2" height="13"/><rect x="306.33" y="865" width="2.2" height="7"/><rect x="313.08" y="859" width="2.2" height="13"/><rect x="319.83" y="865" width="2.2" height="7"/><rect x="326.58" y="851" width="2.2" height="21"/><rect x="333.32" y="865" width="2.2" height="7"/><rect x="340.07" y="859" width="2.2" height="13"/><rect x="346.82" y="865" width="2.2" height="7"/><rect x="353.57" y="859" width="2.2" height="13"/><rect x="360.31" y="865" width="2.2" height="7"/><rect x="367.06" y="859" width="2.2" height="13"/><rect x="373.81" y="865" width="2.2" height="7"/><rect x="380.56" y="859" width="2.2" height="13"/><rect x="387.30" y="865" width="2.2" height="7"/><rect x="394.05" y="851" width="2.2" height="21"/><rect x="400.80" y="865" width="2.2" height="7"/><rect x="407.55" y="859" width="2.2" height="13"/><rect x="414.29" y="865" width="2.2" height="7"/><rect x="421.04" y="859" width="2.2" height="13"/><rect x="427.79" y="865" width="2.2" height="7"/><rect x="434.54" y="859" width="2.2" height="13"/><rect x="441.28" y="865" width="2.2" height="7"/><rect x="448.03" y="859" width="2.2" height="13"/><rect x="454.78" y="865" width="2.2" height="7"/><rect x="461.52" y="851" width="2.2" height="21"/><rect x="468.27" y="865" width="2.2" height="7"/><rect x="475.02" y="859" width="2.2" height="13"/><rect x="481.77" y="865" width="2.2" height="7"/><rect x="488.51" y="859" width="2.2" height="13"/><rect x="495.26" y="865" width="2.2" height="7"/><rect x="502.01" y="859" width="2.2" height="13"/><rect x="508.76" y="865" width="2.2" height="7"/><rect x="515.50" y="859" width="2.2" height="13"/><rect x="522.25" y="865" width="2.2" height="7"/><rect x="529.00" y="851" width="2.2" height="21"/><rect x="535.75" y="865" width="2.2" height="7"/><rect x="542.50" y="859" width="2.2" height="13"/><rect x="549.24" y="865" width="2.2" height="7"/><rect x="555.99" y="859" width="2.2" height="13"/><rect x="562.74" y="865" width="2.2" height="7"/><rect x="569.49" y="859" width="2.2" height="13"/><rect x="576.23" y="865" width="2.2" height="7"/><rect x="582.98" y="859" width="2.2" height="13"/><rect x="589.73" y="865" width="2.2" height="7"/><rect x="596.48" y="851" width="2.2" height="21"/><rect x="603.22" y="865" width="2.2" height="7"/><rect x="609.97" y="859" width="2.2" height="13"/><rect x="616.72" y="865" width="2.2" height="7"/><rect x="623.47" y="859" width="2.2" height="13"/><rect x="630.21" y="865" width="2.2" height="7"/><rect x="636.96" y="859" width="2.2" height="13"/><rect x="643.71" y="865" width="2.2" height="7"/><rect x="650.46" y="859" width="2.2" height="13"/><rect x="657.20" y="865" width="2.2" height="7"/><rect x="663.95" y="851" width="2.2" height="21"/><rect x="670.70" y="865" width="2.2" height="7"/><rect x="677.44" y="859" width="2.2" height="13"/><rect x="684.19" y="865" width="2.2" height="7"/><rect x="690.94" y="859" width="2.2" height="13"/><rect x="697.69" y="865" width="2.2" height="7"/><rect x="704.43" y="859" width="2.2" height="13"/><rect x="711.18" y="865" width="2.2" height="7"/><rect x="717.93" y="859" width="2.2" height="13"/><rect x="724.68" y="865" width="2.2" height="7"/><rect x="731.42" y="851" width="2.2" height="21"/><rect x="738.17" y="865" width="2.2" height="7"/><rect x="744.92" y="859" width="2.2" height="13"/><rect x="751.67" y="865" width="2.2" height="7"/><rect x="758.41" y="859" width="2.2" height="13"/><rect x="765.16" y="865" width="2.2" height="7"/><rect x="771.91" y="859" width="2.2" height="13"/><rect x="778.66" y="865" width="2.2" height="7"/><rect x="785.40" y="859" width="2.2" height="13"/><rect x="792.15" y="865" width="2.2" height="7"/><rect x="798.90" y="851" width="2.2" height="21"/><rect x="805.65" y="865" width="2.2" height="7"/><rect x="812.40" y="859" width="2.2" height="13"/><rect x="819.14" y="865" width="2.2" height="7"/><rect x="825.89" y="859" width="2.2" height="13"/><rect x="832.64" y="865" width="2.2" height="7"/><rect x="839.38" y="859" width="2.2" height="13"/><rect x="846.13" y="865" width="2.2" height="7"/><rect x="852.88" y="859" width="2.2" height="13"/><rect x="859.63" y="865" width="2.2" height="7"/><rect x="866.38" y="851" width="2.2" height="21"/><rect x="873.12" y="865" width="2.2" height="7"/><rect x="879.87" y="859" width="2.2" height="13"/><rect x="886.62" y="865" width="2.2" height="7"/><rect x="893.37" y="859" width="2.2" height="13"/><rect x="900.11" y="865" width="2.2" height="7"/><rect x="906.86" y="859" width="2.2" height="13"/><rect x="913.61" y="865" width="2.2" height="7"/><rect x="920.36" y="859" width="2.2" height="13"/><rect x="927.10" y="865" width="2.2" height="7"/><rect x="933.85" y="851" width="2.2" height="21"/><rect x="940.60" y="865" width="2.2" height="7"/><rect x="947.35" y="859" width="2.2" height="13"/><rect x="954.09" y="865" width="2.2" height="7"/><rect x="960.84" y="859" width="2.2" height="13"/><rect x="967.59" y="865" width="2.2" height="7"/><rect x="974.34" y="859" width="2.2" height="13"/><rect x="981.08" y="865" width="2.2" height="7"/><rect x="987.83" y="859" width="2.2" height="13"/><rect x="994.58" y="865" width="2.2" height="7"/><rect x="1001.32" y="851" width="2.2" height="21"/><rect x="1008.07" y="865" width="2.2" height="7"/><rect x="1014.82" y="859" width="2.2" height="13"/><rect x="1021.57" y="865" width="2.2" height="7"/><rect x="1028.32" y="859" width="2.2" height="13"/><rect x="1035.06" y="865" width="2.2" height="7"/><rect x="1041.81" y="859" width="2.2" height="13"/><rect x="1048.56" y="865" width="2.2" height="7"/><rect x="1055.30" y="859" width="2.2" height="13"/><rect x="1062.05" y="865" width="2.2" height="7"/><rect x="1068.80" y="851" width="2.2" height="21"/><rect x="1075.55" y="865" width="2.2" height="7"/><rect x="1082.30" y="859" width="2.2" height="13"/><rect x="1089.04" y="865" width="2.2" height="7"/><rect x="1095.79" y="859" width="2.2" height="13"/><rect x="1102.54" y="865" width="2.2" height="7"/><rect x="1109.29" y="859" width="2.2" height="13"/><rect x="1116.03" y="865" width="2.2" height="7"/><rect x="1122.78" y="859" width="2.2" height="13"/><rect x="1129.53" y="865" width="2.2" height="7"/><rect x="1136.28" y="851" width="2.2" height="21"/><rect x="1143.02" y="865" width="2.2" height="7"/><rect x="1149.77" y="859" width="2.2" height="13"/><rect x="1156.52" y="865" width="2.2" height="7"/><rect x="1163.26" y="859" width="2.2" height="13"/><rect x="1170.01" y="865" width="2.2" height="7"/><rect x="1176.76" y="859" width="2.2" height="13"/><rect x="1183.51" y="865" width="2.2" height="7"/><rect x="1190.26" y="859" width="2.2" height="13"/><rect x="1197.00" y="865" width="2.2" height="7"/><rect x="1203.75" y="851" width="2.2" height="21"/><rect x="1210.50" y="865" width="2.2" height="7"/><rect x="1217.24" y="859" width="2.2" height="13"/><rect x="1223.99" y="865" width="2.2" height="7"/><rect x="1230.74" y="859" width="2.2" height="13"/><rect x="1237.49" y="865" width="2.2" height="7"/><rect x="1244.24" y="859" width="2.2" height="13"/><rect x="1250.98" y="865" width="2.2" height="7"/><rect x="1257.73" y="859" width="2.2" height="13"/><rect x="1264.48" y="865" width="2.2" height="7"/><rect x="1271.22" y="851" width="2.2" height="21"/><rect x="1277.97" y="865" width="2.2" height="7"/><rect x="1284.72" y="859" width="2.2" height="13"/><rect x="1291.47" y="865" width="2.2" height="7"/><rect x="1298.22" y="859" width="2.2" height="13"/><rect x="1304.96" y="865" width="2.2" height="7"/><rect x="1311.71" y="859" width="2.2" height="13"/><rect x="1318.46" y="865" width="2.2" height="7"/><rect x="1325.20" y="859" width="2.2" height="13"/><rect x="1331.95" y="865" width="2.2" height="7"/><rect x="1338.70" y="851" width="2.2" height="21"/><rect x="1345.45" y="865" width="2.2" height="7"/><rect x="1352.19" y="859" width="2.2" height="13"/><rect x="1358.94" y="865" width="2.2" height="7"/><rect x="1365.69" y="859" width="2.2" height="13"/><rect x="1372.44" y="865" width="2.2" height="7"/><rect x="1379.18" y="859" width="2.2" height="13"/><rect x="1385.93" y="865" width="2.2" height="7"/><rect x="1392.68" y="859" width="2.2" height="13"/><rect x="1399.43" y="865" width="2.2" height="7"/><rect x="1406.17" y="851" width="2.2" height="21"/><rect x="1412.92" y="865" width="2.2" height="7"/><rect x="1419.67" y="859" width="2.2" height="13"/><rect x="1426.42" y="865" width="2.2" height="7"/><rect x="1433.16" y="859" width="2.2" height="13"/><rect x="1439.91" y="865" width="2.2" height="7"/><rect x="1446.66" y="859" width="2.2" height="13"/><rect x="1453.41" y="865" width="2.2" height="7"/><rect x="1460.15" y="859" width="2.2" height="13"/><rect x="1466.90" y="865" width="2.2" height="7"/><rect x="1473.65" y="851" width="2.2" height="21"/><rect x="1480.40" y="865" width="2.2" height="7"/><rect x="1487.14" y="859" width="2.2" height="13"/><rect x="1493.89" y="865" width="2.2" height="7"/><rect x="1500.64" y="859" width="2.2" height="13"/><rect x="1507.39" y="865" width="2.2" height="7"/><rect x="1514.14" y="859" width="2.2" height="13"/><rect x="1520.88" y="865" width="2.2" height="7"/><rect x="1527.63" y="859" width="2.2" height="13"/><rect x="1534.38" y="865" width="2.2" height="7"/><rect x="1541.12" y="851" width="2.2" height="21"/><rect x="1547.87" y="865" width="2.2" height="7"/><rect x="1554.62" y="859" width="2.2" height="13"/><rect x="1561.37" y="865" width="2.2" height="7"/><rect x="1568.12" y="859" width="2.2" height="13"/><rect x="1574.86" y="865" width="2.2" height="7"/><rect x="1581.61" y="859" width="2.2" height="13"/><rect x="1588.36" y="865" width="2.2" height="7"/><rect x="1595.11" y="859" width="2.2" height="13"/><rect x="1601.85" y="865" width="2.2" height="7"/><rect x="1608.60" y="851" width="2.2" height="21"/><rect x="1615.35" y="865" width="2.2" height="7"/><rect x="1622.10" y="859" width="2.2" height="13"/><rect x="1628.84" y="865" width="2.2" height="7"/><rect x="1635.59" y="859" width="2.2" height="13"/><rect x="1642.34" y="865" width="2.2" height="7"/><rect x="1649.09" y="859" width="2.2" height="13"/><rect x="1655.83" y="865" width="2.2" height="7"/><rect x="1662.58" y="859" width="2.2" height="13"/><rect x="1669.33" y="865" width="2.2" height="7"/><rect x="1676.07" y="851" width="2.2" height="21"/><rect x="1682.82" y="865" width="2.2" height="7"/><rect x="1689.57" y="859" width="2.2" height="13"/><rect x="1696.32" y="865" width="2.2" height="7"/><rect x="1703.07" y="859" width="2.2" height="13"/><rect x="1709.81" y="865" width="2.2" height="7"/><rect x="1716.56" y="859" width="2.2" height="13"/><rect x="1723.31" y="865" width="2.2" height="7"/><rect x="1730.05" y="859" width="2.2" height="13"/><rect x="1736.80" y="865" width="2.2" height="7"/><rect x="1743.55" y="851" width="2.2" height="21"/><rect x="1750.30" y="865" width="2.2" height="7"/><rect x="1757.05" y="859" width="2.2" height="13"/><rect x="1763.79" y="865" width="2.2" height="7"/><rect x="1770.54" y="859" width="2.2" height="13"/><rect x="1777.29" y="865" width="2.2" height="7"/><rect x="1784.03" y="859" width="2.2" height="13"/><rect x="1790.78" y="865" width="2.2" height="7"/><rect x="1797.53" y="859" width="2.2" height="13"/><rect x="1804.28" y="865" width="2.2" height="7"/><rect x="1811.03" y="851" width="2.2" height="21"/><rect x="1817.77" y="865" width="2.2" height="7"/><rect x="1824.52" y="859" width="2.2" height="13"/><rect x="1831.27" y="865" width="2.2" height="7"/><rect x="1838.01" y="859" width="2.2" height="13"/><rect x="1844.76" y="865" width="2.2" height="7"/><rect x="1851.51" y="859" width="2.2" height="13"/><rect x="1858.26" y="865" width="2.2" height="7"/><rect x="1865.01" y="859" width="2.2" height="13"/><rect x="1871.75" y="865" width="2.2" height="7"/><rect x="1878.50" y="851" width="2.2" height="21"/><rect x="1885.25" y="865" width="2.2" height="7"/><rect x="1891.99" y="859" width="2.2" height="13"/><rect x="1898.74" y="865" width="2.2" height="7"/><rect x="1905.49" y="859" width="2.2" height="13"/><rect x="1912.24" y="865" width="2.2" height="7"/><rect x="1918.99" y="859" width="2.2" height="13"/><rect x="1925.73" y="865" width="2.2" height="7"/><rect x="1932.48" y="859" width="2.2" height="13"/><rect x="1939.23" y="865" width="2.2" height="7"/><rect x="1945.97" y="851" width="2.2" height="21"/><rect x="1952.72" y="865" width="2.2" height="7"/><rect x="1959.47" y="859" width="2.2" height="13"/><rect x="1966.22" y="865" width="2.2" height="7"/><rect x="1972.97" y="859" width="2.2" height="13"/><rect x="1979.71" y="865" width="2.2" height="7"/><rect x="1986.46" y="859" width="2.2" height="13"/><rect x="1993.21" y="865" width="2.2" height="7"/><rect x="1999.95" y="859" width="2.2" height="13"/><rect x="2006.70" y="865" width="2.2" height="7"/><rect x="2013.45" y="851" width="2.2" height="21"/><rect x="2020.20" y="865" width="2.2" height="7"/><rect x="2026.95" y="859" width="2.2" height="13"/><rect x="2033.69" y="865" width="2.2" height="7"/><rect x="2040.44" y="859" width="2.2" height="13"/><rect x="2047.19" y="865" width="2.2" height="7"/><rect x="2053.93" y="859" width="2.2" height="13"/><rect x="2060.68" y="865" width="2.2" height="7"/><rect x="2067.43" y="859" width="2.2" height="13"/><rect x="2074.18" y="865" width="2.2" height="7"/><rect x="2080.92" y="851" width="2.2" height="21"/><rect x="2087.67" y="865" width="2.2" height="7"/><rect x="2094.42" y="859" width="2.2" height="13"/><rect x="2101.17" y="865" width="2.2" height="7"/><rect x="2107.91" y="859" width="2.2" height="13"/><rect x="2114.66" y="865" width="2.2" height="7"/><rect x="2121.41" y="859" width="2.2" height="13"/><rect x="2128.16" y="865" width="2.2" height="7"/><rect x="2134.90" y="859" width="2.2" height="13"/><rect x="2141.65" y="865" width="2.2" height="7"/><rect x="2148.40" y="851" width="2.2" height="21"/><rect x="2155.15" y="865" width="2.2" height="7"/><rect x="2161.89" y="859" width="2.2" height="13"/><rect x="2168.64" y="865" width="2.2" height="7"/><rect x="2175.39" y="859" width="2.2" height="13"/><rect x="2182.14" y="865" width="2.2" height="7"/><rect x="2188.88" y="859" width="2.2" height="13"/><rect x="2195.63" y="865" width="2.2" height="7"/><rect x="2202.38" y="859" width="2.2" height="13"/><rect x="2209.13" y="865" width="2.2" height="7"/><rect x="2215.88" y="851" width="2.2" height="21"/><rect x="2222.62" y="865" width="2.2" height="7"/><rect x="2229.37" y="859" width="2.2" height="13"/><rect x="2236.12" y="865" width="2.2" height="7"/><rect x="2242.86" y="859" width="2.2" height="13"/><rect x="2249.61" y="865" width="2.2" height="7"/><rect x="2256.36" y="859" width="2.2" height="13"/><rect x="2263.11" y="865" width="2.2" height="7"/><rect x="2269.86" y="859" width="2.2" height="13"/><rect x="2276.60" y="865" width="2.2" height="7"/><rect x="2283.35" y="851" width="2.2" height="21"/><rect x="2290.10" y="865" width="2.2" height="7"/><rect x="2296.85" y="859" width="2.2" height="13"/><rect x="2303.59" y="865" width="2.2" height="7"/><rect x="2310.34" y="859" width="2.2" height="13"/><rect x="2317.09" y="865" width="2.2" height="7"/><rect x="2323.84" y="859" width="2.2" height="13"/><rect x="2330.58" y="865" width="2.2" height="7"/><rect x="2337.33" y="859" width="2.2" height="13"/><rect x="2344.08" y="865" width="2.2" height="7"/><rect x="2350.82" y="851" width="2.2" height="21"/><rect x="2357.57" y="865" width="2.2" height="7"/><rect x="2364.32" y="859" width="2.2" height="13"/><rect x="2371.07" y="865" width="2.2" height="7"/><rect x="2377.82" y="859" width="2.2" height="13"/><rect x="2384.56" y="865" width="2.2" height="7"/><rect x="2391.31" y="859" width="2.2" height="13"/><rect x="2398.06" y="865" width="2.2" height="7"/><rect x="2404.80" y="859" width="2.2" height="13"/><rect x="2411.55" y="865" width="2.2" height="7"/><rect x="2418.30" y="851" width="2.2" height="21"/><rect x="2425.05" y="865" width="2.2" height="7"/><rect x="2431.80" y="859" width="2.2" height="13"/><rect x="2438.54" y="865" width="2.2" height="7"/><rect x="2445.29" y="859" width="2.2" height="13"/><rect x="2452.04" y="865" width="2.2" height="7"/><rect x="2458.78" y="859" width="2.2" height="13"/><rect x="2465.53" y="865" width="2.2" height="7"/><rect x="2472.28" y="859" width="2.2" height="13"/><rect x="2479.03" y="865" width="2.2" height="7"/><rect x="2485.77" y="851" width="2.2" height="21"/><rect x="2492.52" y="865" width="2.2" height="7"/><rect x="2499.27" y="859" width="2.2" height="13"/><rect x="2506.02" y="865" width="2.2" height="7"/><rect x="2512.76" y="859" width="2.2" height="13"/><rect x="2519.51" y="865" width="2.2" height="7"/><rect x="2526.26" y="859" width="2.2" height="13"/><rect x="2533.01" y="865" width="2.2" height="7"/><rect x="2539.76" y="859" width="2.2" height="13"/><rect x="2546.50" y="865" width="2.2" height="7"/><rect x="2553.25" y="851" width="2.2" height="21"/><rect x="2560.00" y="865" width="2.2" height="7"/><rect x="2566.74" y="859" width="2.2" height="13"/><rect x="2573.49" y="865" width="2.2" height="7"/><rect x="2580.24" y="859" width="2.2" height="13"/><rect x="2586.99" y="865" width="2.2" height="7"/><rect x="2593.73" y="859" width="2.2" height="13"/><rect x="2600.48" y="865" width="2.2" height="7"/><rect x="2607.23" y="859" width="2.2" height="13"/><rect x="2613.98" y="865" width="2.2" height="7"/><rect x="2620.72" y="851" width="2.2" height="21"/><rect x="2627.47" y="865" width="2.2" height="7"/><rect x="2634.22" y="859" width="2.2" height="13"/><rect x="2640.97" y="865" width="2.2" height="7"/></g>
<g fill="#000" clip-path="url(#rl)"><rect x="125" y="1576.39" width="13" height="2.2"/><rect x="131" y="1569.66" width="7" height="2.2"/><rect x="125" y="1562.92" width="13" height="2.2"/><rect x="131" y="1556.18" width="7" height="2.2"/><rect x="117" y="1549.45" width="21" height="2.2"/><rect x="131" y="1542.72" width="7" height="2.2"/><rect x="125" y="1535.98" width="13" height="2.2"/><rect x="131" y="1529.24" width="7" height="2.2"/><rect x="125" y="1522.51" width="13" height="2.2"/><rect x="131" y="1515.78" width="7" height="2.2"/><rect x="125" y="1509.04" width="13" height="2.2"/><rect x="131" y="1502.31" width="7" height="2.2"/><rect x="125" y="1495.57" width="13" height="2.2"/><rect x="131" y="1488.84" width="7" height="2.2"/><rect x="117" y="1482.10" width="21" height="2.2"/><rect x="131" y="1475.37" width="7" height="2.2"/><rect x="125" y="1468.63" width="13" height="2.2"/><rect x="131" y="1461.89" width="7" height="2.2"/><rect x="125" y="1455.16" width="13" height="2.2"/><rect x="131" y="1448.42" width="7" height="2.2"/><rect x="125" y="1441.69" width="13" height="2.2"/><rect x="131" y="1434.95" width="7" height="2.2"/><rect x="125" y="1428.22" width="13" height="2.2"/><rect x="131" y="1421.49" width="7" height="2.2"/><rect x="117" y="1414.75" width="21" height="2.2"/><rect x="131" y="1408.02" width="7" height="2.2"/><rect x="125" y="1401.28" width="13" height="2.2"/><rect x="131" y="1394.55" width="7" height="2.2"/><rect x="125" y="1387.81" width="13" height="2.2"/><rect x="131" y="1381.08" width="7" height="2.2"/><rect x="125" y="1374.34" width="13" height="2.2"/><rect x="131" y="1367.61" width="7" height="2.2"/><rect x="125" y="1360.87" width="13" height="2.2"/><rect x="131" y="1354.13" width="7" height="2.2"/><rect x="117" y="1347.40" width="21" height="2.2"/><rect x="131" y="1340.66" width="7" height="2.2"/><rect x="125" y="1333.93" width="13" height="2.2"/><rect x="131" y="1327.20" width="7" height="2.2"/><rect x="125" y="1320.46" width="13" height="2.2"/><rect x="131" y="1313.73" width="7" height="2.2"/><rect x="125" y="1306.99" width="13" height="2.2"/><rect x="131" y="1300.26" width="7" height="2.2"/><rect x="125" y="1293.52" width="13" height="2.2"/><rect x="131" y="1286.79" width="7" height="2.2"/><rect x="117" y="1280.05" width="21" height="2.2"/><rect x="131" y="1273.32" width="7" height="2.2"/><rect x="125" y="1266.58" width="13" height="2.2"/><rect x="131" y="1259.85" width="7" height="2.2"/><rect x="125" y="1253.11" width="13" height="2.2"/><rect x="131" y="1246.38" width="7" height="2.2"/><rect x="125" y="1239.64" width="13" height="2.2"/><rect x="131" y="1232.90" width="7" height="2.2"/><rect x="125" y="1226.17" width="13" height="2.2"/><rect x="131" y="1219.43" width="7" height="2.2"/><rect x="117" y="1212.70" width="21" height="2.2"/><rect x="131" y="1205.97" width="7" height="2.2"/><rect x="125" y="1199.23" width="13" height="2.2"/><rect x="131" y="1192.50" width="7" height="2.2"/><rect x="125" y="1185.76" width="13" height="2.2"/><rect x="131" y="1179.03" width="7" height="2.2"/><rect x="125" y="1172.29" width="13" height="2.2"/><rect x="131" y="1165.56" width="7" height="2.2"/><rect x="125" y="1158.82" width="13" height="2.2"/><rect x="131" y="1152.09" width="7" height="2.2"/><rect x="117" y="1145.35" width="21" height="2.2"/><rect x="131" y="1138.62" width="7" height="2.2"/><rect x="125" y="1131.88" width="13" height="2.2"/><rect x="131" y="1125.14" width="7" height="2.2"/><rect x="125" y="1118.41" width="13" height="2.2"/><rect x="131" y="1111.67" width="7" height="2.2"/><rect x="125" y="1104.94" width="13" height="2.2"/><rect x="131" y="1098.20" width="7" height="2.2"/><rect x="125" y="1091.47" width="13" height="2.2"/><rect x="131" y="1084.74" width="7" height="2.2"/><rect x="117" y="1078.00" width="21" height="2.2"/><rect x="131" y="1071.27" width="7" height="2.2"/><rect x="125" y="1064.53" width="13" height="2.2"/><rect x="131" y="1057.80" width="7" height="2.2"/><rect x="125" y="1051.06" width="13" height="2.2"/><rect x="131" y="1044.33" width="7" height="2.2"/><rect x="125" y="1037.59" width="13" height="2.2"/><rect x="131" y="1030.86" width="7" height="2.2"/><rect x="125" y="1024.12" width="13" height="2.2"/><rect x="131" y="1017.38" width="7" height="2.2"/><rect x="117" y="1010.65" width="21" height="2.2"/><rect x="131" y="1003.92" width="7" height="2.2"/><rect x="125" y="997.18" width="13" height="2.2"/><rect x="131" y="990.45" width="7" height="2.2"/><rect x="125" y="983.71" width="13" height="2.2"/><rect x="131" y="976.98" width="7" height="2.2"/><rect x="125" y="970.24" width="13" height="2.2"/><rect x="131" y="963.51" width="7" height="2.2"/><rect x="125" y="956.77" width="13" height="2.2"/><rect x="131" y="950.04" width="7" height="2.2"/><rect x="117" y="943.30" width="21" height="2.2"/><rect x="131" y="936.57" width="7" height="2.2"/><rect x="125" y="929.83" width="13" height="2.2"/><rect x="131" y="923.10" width="7" height="2.2"/><rect x="125" y="916.36" width="13" height="2.2"/><rect x="131" y="909.62" width="7" height="2.2"/><rect x="125" y="902.89" width="13" height="2.2"/><rect x="131" y="896.16" width="7" height="2.2"/><rect x="125" y="889.42" width="13" height="2.2"/><rect x="131" y="882.69" width="7" height="2.2"/><rect x="117" y="875.95" width="21" height="2.2"/>
<text x="101" y="1548.15" font-family="Liberation Sans" font-size="19.5" font-weight="normal" fill="#000">−2,5</text>
<text x="101" y="1480.80" font-family="Liberation Sans" font-size="19.5" font-weight="bold" fill="#000">−2</text>
<text x="101" y="1413.45" font-family="Liberation Sans" font-size="19.5" font-weight="normal" fill="#000">−1,5</text>
<text x="101" y="1346.10" font-family="Liberation Sans" font-size="19.5" font-weight="bold" fill="#000">−1</text>
<text x="101" y="1278.75" font-family="Liberation Sans" font-size="19.5" font-weight="normal" fill="#000">−0,5</text>
<text x="101" y="1211.40" font-family="Liberation Sans" font-size="19.5" font-weight="bold" fill="#000">0</text>
<text x="101" y="1144.05" font-family="Liberation Sans" font-size="19.5" font-weight="normal" fill="#000">0,5</text>
<text x="101" y="1076.70" font-family="Liberation Sans" font-size="19.5" font-weight="bold" fill="#000">1</text>
<text x="101" y="1009.35" font-family="Liberation Sans" font-size="19.5" font-weight="normal" fill="#000">1,5</text>
<text x="101" y="942.00" font-family="Liberation Sans" font-size="19.5" font-weight="bold" fill="#000">2</text>
<text x="101" y="874.65" font-family="Liberation Sans" font-size="19.5" font-weight="normal" fill="#000">2,5</text>
</g>
<text x="193.63" y="850" font-family="Liberation Sans" font-size="19.5" font-weight="normal" fill="#000" clip-path="url(#rtl)">−0,5</text>
<text x="261.10" y="850" font-family="Liberation Sans" font-size="19.5" font-weight="bold" fill="#000" clip-path="url(#rtl)">0</text>
<text x="328.58" y="850" font-family="Liberation Sans" font-size="19.5" font-weight="normal" fill="#000" clip-path="url(#rtl)">0,5</text>
<text x="396.05" y="850" font-family="Liberation Sans" font-size="19.5" font-weight="bold" fill="#000" clip-path="url(#rtl)">1</text>
<text x="463.52" y="850" font-family="Liberation Sans" font-size="19.5" font-weight="normal" fill="#000" clip-path="url(#rtl)">1,5</text>
<text x="531.00" y="850" font-family="Liberation Sans" font-size="19.5" font-weight="bold" fill="#000" clip-path="url(#rtl)">2</text>
<text x="598.48" y="850" font-family="Liberation Sans" font-size="19.5" font-weight="normal" fill="#000" clip-path="url(#rtl)">2,5</text>
<text x="665.95" y="850" font-family="Liberation Sans" font-size="19.5" font-weight="bold" fill="#000" clip-path="url(#rtl)">3</text>
<text x="733.42" y="850" font-family="Liberation Sans" font-size="19.5" font-weight="normal" fill="#000" clip-path="url(#rtl)">3,5</text>
<text x="800.90" y="850" font-family="Liberation Sans" font-size="19.5" font-weight="bold" fill="#000" clip-path="url(#rtl)">4</text>
<text x="868.38" y="850" font-family="Liberation Sans" font-size="19.5" font-weight="normal" fill="#000" clip-path="url(#rtl)">4,5</text>
<text x="935.85" y="850" font-family="Liberation Sans" font-size="19.5" font-weight="bold" fill="#000" clip-path="url(#rtl)">5</text>
<text x="1003.32" y="850" font-family="Liberation Sans" font-size="19.5" font-weight="normal" fill="#000" clip-path="url(#rtl)">5,5</text>
<text x="1070.80" y="850" font-family="Liberation Sans" font-size="19.5" font-weight="bold" fill="#000" clip-path="url(#rtl)">6</text>
<text x="1138.28" y="850" font-family="Liberation Sans" font-size="19.5" font-weight="normal" fill="#000" clip-path="url(#rtl)">6,5</text>
<text x="1205.75" y="850" font-family="Liberation Sans" font-size="19.5" font-weight="bold" fill="#000" clip-path="url(#rtl)">7</text>
<text x="1273.22" y="850" font-family="Liberation Sans" font-size="19.5" font-weight="normal" fill="#000" clip-path="url(#rtl)">7,5</text>
<text x="1340.70" y="850" font-family="Liberation Sans" font-size="19.5" font-weight="bold" fill="#000" clip-path="url(#rtl)">8</text>
<text x="1408.17" y="850" font-family="Liberation Sans" font-size="19.5" font-weight="normal" fill="#000" clip-path="url(#rtl)">8,5</text>
<text x="1475.65" y="850" font-family="Liberation Sans" font-size="19.5" font-weight="bold" fill="#000" clip-path="url(#rtl)">9</text>
<text x="1543.12" y="850" font-family="Liberation Sans" font-size="19.5" font-weight="normal" fill="#000" clip-path="url(#rtl)">9,5</text>
<text x="1610.60" y="850" font-family="Liberation Sans" font-size="19.5" font-weight="bold" fill="#000" clip-path="url(#rtl)">10</text>
<text x="1678.07" y="850" font-family="Liberation Sans" font-size="19.5" font-weight="normal" fill="#000" clip-path="url(#rtl)">10,5</text>
<text x="1745.55" y="850" font-family="Liberation Sans" font-size="19.5" font-weight="bold" fill="#000" clip-path="url(#rtl)">11</text>
<text x="1813.03" y="850" font-family="Liberation Sans" font-size="19.5" font-weight="normal" fill="#000" clip-path="url(#rtl)">11,5</text>
<text x="1880.50" y="850" font-family="Liberation Sans" font-size="19.5" font-weight="bold" fill="#000" clip-path="url(#rtl)">12</text>
<text x="1947.97" y="850" font-family="Liberation Sans" font-size="19.5" font-weight="normal" fill="#000" clip-path="url(#rtl)">12,5</text>
<text x="2015.45" y="850" font-family="Liberation Sans" font-size="19.5" font-weight="bold" fill="#000" clip-path="url(#rtl)">13</text>
<text x="2082.92" y="850" font-family="Liberation Sans" font-size="19.5" font-weight="normal" fill="#000" clip-path="url(#rtl)">13,5</text>
<text x="2150.40" y="850" font-family="Liberation Sans" font-size="19.5" font-weight="bold" fill="#000" clip-path="url(#rtl)">14</text>
<text x="2217.88" y="850" font-family="Liberation Sans" font-size="19.5" font-weight="normal" fill="#000" clip-path="url(#rtl)">14,5</text>
<text x="2285.35" y="850" font-family="Liberation Sans" font-size="19.5" font-weight="bold" fill="#000" clip-path="url(#rtl)">15</text>
<text x="2352.82" y="850" font-family="Liberation Sans" font-size="19.5" font-weight="normal" fill="#000" clip-path="url(#rtl)">15,5</text>
<text x="2420.30" y="850" font-family="Liberation Sans" font-size="19.5" font-weight="bold" fill="#000" clip-path="url(#rtl)">16</text>
<text x="2487.77" y="850" font-family="Liberation Sans" font-size="19.5" font-weight="normal" fill="#000" clip-path="url(#rtl)">16,5</text>
<text x="2555.25" y="850" font-family="Liberation Sans" font-size="19.5" font-weight="bold" fill="#000" clip-path="url(#rtl)">17</text>
<text x="2622.72" y="850" font-family="Liberation Sans" font-size="19.5" font-weight="normal" fill="#000" clip-path="url(#rtl)">17,5</text>
</svg>
<div class="a" style="left:99px;top:833px;width:38px;height:38px;border:1.5px solid #e2e2e2;background:#f5f5f5"></div>
<div class="a" style="left:101.00px;top:842.41px;font-size:17px;line-height:20.4px;color:#111;font-weight:normal;">in</div>
<svg class="a" style="left:0;top:0" width="2700" height="1668" viewBox="0 0 2700 1668"><defs><clipPath id="dr"><rect x="138" y="872" width="2504" height="685.5"/></clipPath></defs><g clip-path="url(#dr)"><path d="M260.1 1213.7 L273.4 1210.4 L286.6 1207.1 L299.9 1204.0 L313.2 1200.9 L326.5 1197.9 L339.7 1195.1 L353.0 1192.3 L366.3 1189.6 L379.6 1186.9 L392.8 1184.4 L406.1 1181.9 L419.4 1179.6 L432.6 1177.3 L445.9 1175.1 L459.2 1173.0 L472.5 1171.0 L485.7 1169.0 L499.0 1167.2 L512.3 1165.4 L525.5 1163.7 L538.8 1162.1 L552.1 1160.6 L565.4 1159.1 L578.6 1157.8 L591.9 1156.5 L605.2 1155.3 L618.5 1154.2 L631.7 1153.2 L645.0 1152.2 L658.3 1151.4 L671.5 1150.6 L684.8 1149.9 L698.1 1149.3 L711.4 1148.8 L724.6 1148.3 L737.9 1148.0 L751.2 1147.7 L764.5 1147.5 L777.7 1147.3 L791.0 1147.3 M260.1 1213.7 L273.4 1217.0 L286.6 1220.3 L299.9 1223.4 L313.2 1226.5 L326.5 1229.5 L339.7 1232.3 L353.0 1235.1 L366.3 1237.8 L379.6 1240.5 L392.8 1243.0 L406.1 1245.5 L419.4 1247.8 L432.6 1250.1 L445.9 1252.3 L459.2 1254.4 L472.5 1256.4 L485.7 1258.4 L499.0 1260.2 L512.3 1262.0 L525.5 1263.7 L538.8 1265.3 L552.1 1266.8 L565.4 1268.3 L578.6 1269.6 L591.9 1270.9 L605.2 1272.1 L618.5 1273.2 L631.7 1274.2 L645.0 1275.2 L658.3 1276.0 L671.5 1276.8 L684.8 1277.5 L698.1 1278.1 L711.4 1278.6 L724.6 1279.1 L737.9 1279.4 L751.2 1279.7 L764.5 1279.9 L777.7 1280.1 L791.0 1280.1" fill="none" stroke="#0000cc" stroke-width="2.2"/><line x1="791" y1="1147.2" x2="791" y2="1280.2" stroke="#0000cc" stroke-width="3"/><rect x="791" y="1152.3" width="106.4" height="122.1" fill="none" stroke="#0000cc" stroke-width="2"/><path d="M791 1147.2 H2385.5 V1280.2 H791" fill="none" stroke="#0000cc" stroke-width="2.2"/><rect x="897" y="1182.2" width="276.8" height="63.1" rx="24" fill="none" stroke="#000" stroke-width="2" stroke-dasharray="10 10" stroke-linecap="round"/><rect x="960.7" y="1165.7" width="224.1" height="95.5" rx="27" fill="none" stroke="#ff0000" stroke-width="2" stroke-dasharray="10 10" stroke-linecap="round"/><path d="M966.0 1214.5 L966.5 1213.5 L967.0 1212.4 L967.5 1211.4 L968.0 1210.5 L968.5 1209.5 L969.0 1208.6 L969.5 1207.7 L970.0 1206.9 L970.5 1206.2 L971.0 1205.5 L971.5 1204.9 L972.0 1204.4 L972.5 1203.9 L973.0 1203.6 L973.5 1203.3 L974.0 1203.1 L974.5 1203.0 L975.0 1203.0 L975.5 1203.1 L976.0 1203.3 L976.5 1203.6 L977.0 1203.9 L977.5 1204.4 L978.0 1204.9 L978.5 1205.5 L979.0 1206.2 L979.5 1206.9 L980.0 1207.7 L980.5 1208.6 L981.0 1209.5 L981.5 1210.5 L982.0 1211.4 L982.5 1212.4 L983.0 1213.5 L983.5 1214.5 L984.0 1215.5 L984.5 1216.6 L985.0 1217.6 L985.5 1218.5 L986.0 1219.5 L986.5 1220.4 L987.0 1221.3 L987.5 1222.1 L988.0 1222.8 L988.5 1223.5 L989.0 1224.1 L989.5 1224.6 L990.0 1225.1 L990.5 1225.4 L991.0 1225.7 L991.5 1225.9 L992.0 1226.0 L992.5 1226.0 L993.0 1225.9 L993.5 1225.7 L994.0 1225.4 L994.5 1225.1 L995.0 1224.6 L995.5 1224.1 L996.0 1223.5 L996.5 1222.8 L997.0 1222.1 L997.5 1221.3 L998.0 1220.4 L998.5 1219.5 L999.0 1218.5 L999.5 1217.6 L1000.0 1216.6 L1000.5 1215.5 L1001.0 1214.5 L1001.5 1213.5 L1002.0 1212.4 L1002.5 1211.4 L1003.0 1210.5 L1003.5 1209.5 L1004.0 1208.6 L1004.5 1207.7 L1005.0 1206.9 L1005.5 1206.2 L1006.0 1205.5 L1006.5 1204.9 L1007.0 1204.4 L1007.5 1203.9 L1008.0 1203.6 L1008.5 1203.3 L1009.0 1203.1 L1009.5 1203.0 L1010.0 1203.0 L1010.5 1203.1 L1011.0 1203.3 L1011.5 1203.6 L1012.0 1203.9 L1012.5 1204.4 L1013.0 1204.9 L1013.5 1205.5 L1014.0 1206.2 L1014.5 1206.9 L1015.0 1207.7 L1015.5 1208.6 L1016.0 1209.5 L1016.5 1210.5 L1017.0 1211.4 L1017.5 1212.4 L1018.0 1213.5 L1018.5 1214.5 L1019.0 1215.5 L1019.5 1216.6 L1020.0 1217.6 L1020.5 1218.5 L1021.0 1219.5 L1021.5 1220.4 L1022.0 1221.3 L1022.5 1222.1 L1023.0 1222.8 L1023.5 1223.5 L1024.0 1224.1 L1024.5 1224.6 L1025.0 1225.1 L1025.5 1225.4 L1026.0 1225.7 L1026.5 1225.9 L1027.0 1226.0 L1027.5 1226.0 L1028.0 1225.9 L1028.5 1225.7 L1029.0 1225.4 L1029.5 1225.1 L1030.0 1224.6 L1030.5 1224.1 L1031.0 1223.5 L1031.5 1222.8 L1032.0 1222.1 L1032.5 1221.3 L1033.0 1220.4 L1033.5 1219.5 L1034.0 1218.5 L1034.5 1217.6 L1035.0 1216.6 L1035.5 1215.5 L1036.0 1214.5 L1036.5 1213.5 L1037.0 1212.4 L1037.5 1211.4 L1038.0 1210.5 L1038.5 1209.5 L1039.0 1208.6 L1039.5 1207.7 L1040.0 1206.9 L1040.5 1206.2 L1041.0 1205.5 L1041.5 1204.9 L1042.0 1204.4 L1042.5 1203.9 L1043.0 1203.6 L1043.5 1203.3 L1044.0 1203.1 L1044.5 1203.0 L1045.0 1203.0 L1045.5 1203.1 L1046.0 1203.3 L1046.5 1203.6 L1047.0 1203.9 L1047.5 1204.4 L1048.0 1204.9 L1048.5 1205.5 L1049.0 1206.2 L1049.5 1206.9 L1050.0 1207.7 L1050.5 1208.6 L1051.0 1209.5 L1051.5 1210.5 L1052.0 1211.4 L1052.5 1212.4 L1053.0 1213.5 L1053.5 1214.5 L1054.0 1215.5 L1054.5 1216.6 L1055.0 1217.6 L1055.5 1218.5 L1056.0 1219.5 L1056.5 1220.4 L1057.0 1221.3 L1057.5 1222.1 L1058.0 1222.8 L1058.5 1223.5 L1059.0 1224.1 L1059.5 1224.6 L1060.0 1225.1 L1060.5 1225.4 L1061.0 1225.7 L1061.5 1225.9 L1062.0 1226.0 L1062.5 1226.0 L1063.0 1225.9 L1063.5 1225.7 L1064.0 1225.4 L1064.5 1225.1 L1065.0 1224.6 L1065.5 1224.1 L1066.0 1223.5 L1066.5 1222.8 L1067.0 1222.1 L1067.5 1221.3 L1068.0 1220.4 L1068.5 1219.5 L1069.0 1218.5 L1069.5 1217.6 L1070.0 1216.6 L1070.5 1215.5 L1071.0 1214.5 L1071.5 1213.5 L1072.0 1212.4 L1072.5 1211.4 L1073.0 1210.5 L1073.5 1209.5 L1074.0 1208.6 L1074.5 1207.7 L1075.0 1206.9 L1075.5 1206.2 L1076.0 1205.5 L1076.5 1204.9 L1077.0 1204.4 L1077.5 1203.9 L1078.0 1203.6 L1078.5 1203.3 L1079.0 1203.1 L1079.5 1203.0 L1080.0 1203.0 L1080.5 1203.1 L1081.0 1203.3 L1081.5 1203.6 L1082.0 1203.9 L1082.5 1204.4 L1083.0 1204.9 L1083.5 1205.5 L1084.0 1206.2 L1084.5 1206.9 L1085.0 1207.7 L1085.5 1208.6 L1086.0 1209.5 L1086.5 1210.5 L1087.0 1211.4 L1087.5 1212.4 L1088.0 1213.5 L1088.5 1214.5 L1089.0 1215.5 L1089.5 1216.6 L1090.0 1217.6 L1090.5 1218.5 L1091.0 1219.5 L1091.5 1220.4 L1092.0 1221.3 L1092.5 1222.1 L1093.0 1222.8 L1093.5 1223.5 L1094.0 1224.1 L1094.5 1224.6 L1095.0 1225.1 L1095.5 1225.4 L1096.0 1225.7 L1096.5 1225.9 L1097.0 1226.0 L1097.5 1226.0 L1098.0 1225.9 L1098.5 1225.7 L1099.0 1225.4 L1099.5 1225.1 L1100.0 1224.6 L1100.5 1224.1 L1101.0 1223.5 L1101.5 1222.8 L1102.0 1222.1 L1102.5 1221.3 L1103.0 1220.4 L1103.5 1219.5 L1104.0 1218.5 L1104.5 1217.6 L1105.0 1216.6 L1105.5 1215.5 L1106.0 1214.5" fill="none" stroke="#000" stroke-width="2" stroke-dasharray="10 9.3" stroke-linecap="round"/><path d="M1050 1206 A23.5 23.5 0 1 1 1096 1206 M1059.5 1201.8 H1091.3 M1050 1206 L1072.2 1247.4 L1096 1206 M1061 1202 L1072.2 1247.4 L1083 1202" fill="none" stroke="#ff0000" stroke-width="2" stroke-dasharray="7 7" stroke-linecap="round"/><rect x="1216" y="1151.9" width="160" height="123.8" rx="38" fill="none" stroke="#000" stroke-width="2" stroke-dasharray="10 10" stroke-linecap="round"/><rect x="1495.6" y="1115.5" width="186.3" height="36.8" fill="none" stroke="#0000cc" stroke-width="2.2"/><path d="M2115.4 1147.2 L2250.2 988.3 H2519.8 L2385.5 1147.2" fill="none" stroke="#0000cc" stroke-width="2.2"/><path d="M2115.4 1247.9 L2250.2 1326.1 H2519.8 L2385.5 1247.9 Z" fill="none" stroke="#0000cc" stroke-width="2.2"/><rect x="2012.9" y="1162.75" width="398.5" height="101.95" fill="none" stroke="#b00068" stroke-width="2"/><rect x="2024.2" y="1166.3" width="25.7" height="94.9" fill="none" stroke="#b00068" stroke-width="2"/><path d="M2024.2 1182.4 H2049.9 M2024.2 1245 H2049.9" stroke="#b00068" stroke-width="2"/><rect x="2135" y="1152" width="11.4" height="123.4" fill="none" stroke="#b00068" stroke-width="2"/><rect x="2374.2" y="1152" width="10.8" height="123.4" fill="none" stroke="#b00068" stroke-width="2"/><rect x="2054.7" y="1166.3" width="372.9" height="94.9" fill="rgba(0,0,0,0.4)" stroke="#222" stroke-width="1.6"/><circle cx="1640.3" cy="1213.7" r="12.8" fill="#fff" stroke="#0000cc" stroke-width="1.6"/><path d="M1640.3 1213.7 V1200.9 A12.8 12.8 0 0 0 1627.5 1213.7 Z M1640.3 1213.7 V1226.5 A12.8 12.8 0 0 0 1653.1 1213.7 Z" fill="#0000cc"/><circle cx="1959" cy="1213.7" r="13" fill="#fff" stroke="#ff0000" stroke-width="1.5"/><circle cx="1959" cy="1213.7" r="10.5" fill="#ff0000"/></g></svg>
<div class="a" style="left:154.20px;top:877.09px;font-size:14.7px;line-height:17.64px;color:#1a1a1a;font-weight:normal;letter-spacing:0.5px">A simple model rocket</div>
<div class="a" style="left:154.20px;top:896.79px;font-size:14.7px;line-height:17.64px;color:#1a1a1a;font-weight:normal;letter-spacing:0.19px">Length 16,748 in, max. diameter 0,984 in</div>
<div class="a" style="left:154.20px;top:915.89px;font-size:14.7px;line-height:17.64px;color:#1a1a1a;font-weight:normal;letter-spacing:0.32px">Mass with no motors 1,7 oz</div>
<div class="a" style="left:154.20px;top:935.49px;font-size:14.7px;line-height:17.64px;color:#1a1a1a;font-weight:normal;letter-spacing:0.35px">Mass with motors 2,51 oz</div>
<div class="a" style="left:2028.63px;width:600px;text-align:right;top:877.34px;font-size:14.7px;line-height:17.64px;color:#1a1a1a;letter-spacing:0.13px">Stability: 2,4 cal / 14,1 %</div>
<div class="a" style="left:2029.93px;width:600px;text-align:right;top:897.06px;font-size:14.2px;line-height:17.04px;color:#1a1a1a;letter-spacing:-0.07px">CG: 10,229 in</div>
<div class="a" style="left:2029.9px;width:600px;text-align:right;top:916.46px;font-size:14.2px;line-height:17.04px;color:#1a1a1a;letter-spacing:-0.1px">CP: 12,589 in</div>
<div class="a" style="left:2005.05px;width:600px;text-align:right;top:939.12px;font-size:11.5px;line-height:13.80px;color:#9a9a9a;letter-spacing:0.05px">at M=0,300</div>
<svg class="a" style="left:2512px;top:893px;" width="22" height="44" viewBox="0 0 22 44"><circle cx="10.5" cy="12" r="7.8" fill="#fff" stroke="#0000cc" stroke-width="1.3"/><path d="M10.5 12 V4.2 A7.8 7.8 0 0 1 18.3 12 Z M10.5 12 V19.8 A7.8 7.8 0 0 1 2.7 12 Z" fill="#0000cc"/><circle cx="10.5" cy="31.3" r="8" fill="#fff" stroke="#ff0000" stroke-width="1.2"/><circle cx="10.5" cy="31.3" r="6.3" fill="#ff0000"/></svg>
<div class="a" style="left:154.20px;top:1489.49px;font-size:14.7px;line-height:17.64px;color:#10108c;font-weight:normal;letter-spacing:0px">Apogee:</div>
<div class="a" style="left:286.80px;top:1489.49px;font-size:14.7px;line-height:17.64px;color:#10108c;font-weight:normal;letter-spacing:0.3px">1039 ft</div>
<div class="a" style="left:154.20px;top:1509.29px;font-size:14.7px;line-height:17.64px;color:#10108c;font-weight:normal;letter-spacing:0.4px">Max. velocity:</div>
<div class="a" style="left:286.80px;top:1509.29px;font-size:14.7px;line-height:17.64px;color:#10108c;font-weight:normal;letter-spacing:0.31px">311 ft/s  (Mach 0,280)</div>
<div class="a" style="left:154.20px;top:1528.19px;font-size:14.7px;line-height:17.64px;color:#10108c;font-weight:normal;letter-spacing:0.3px">Max. acceleration:</div>
<div class="a" style="left:286.80px;top:1528.19px;font-size:14.7px;line-height:17.64px;color:#10108c;font-weight:normal;letter-spacing:0.9px">619 ft/s²</div>
<div class="a" style="left:145.10px;top:1611.32px;font-size:11.6px;line-height:13.92px;color:#333;font-weight:normal;letter-spacing:0.08px">Click to select</div>
<div class="a" style="left:233.30px;top:1611.32px;font-size:11.6px;line-height:13.92px;color:#333;font-weight:normal;letter-spacing:0.15px">Shift+click to select other</div>
<div class="a" style="left:381.40px;top:1611.32px;font-size:11.6px;line-height:13.92px;color:#333;font-weight:normal;letter-spacing:0.12px">Double-click to edit</div>
<div class="a" style="left:497.30px;top:1611.32px;font-size:11.6px;line-height:13.92px;color:#333;font-weight:normal;letter-spacing:0.2px">Click+drag to move</div>
<div class="a" style="left:2498px;top:1602px;width:28px;height:28px;background:#0a7aff;border-radius:6px"></div><svg class="a" style="left:2498px;top:1602px;" width="28" height="28" viewBox="0 0 28 28"><path d="M7.2 14.8 L12 20 L20.5 7.5" fill="none" stroke="#fff" stroke-width="3.4" stroke-linecap="round" stroke-linejoin="round"/></svg>
<div class="a" style="left:2536.90px;top:1604.48px;font-size:18.4px;line-height:22.08px;color:#262626;font-weight:normal;letter-spacing:0.2px;">Show warnings</div>
</div></body></html>
